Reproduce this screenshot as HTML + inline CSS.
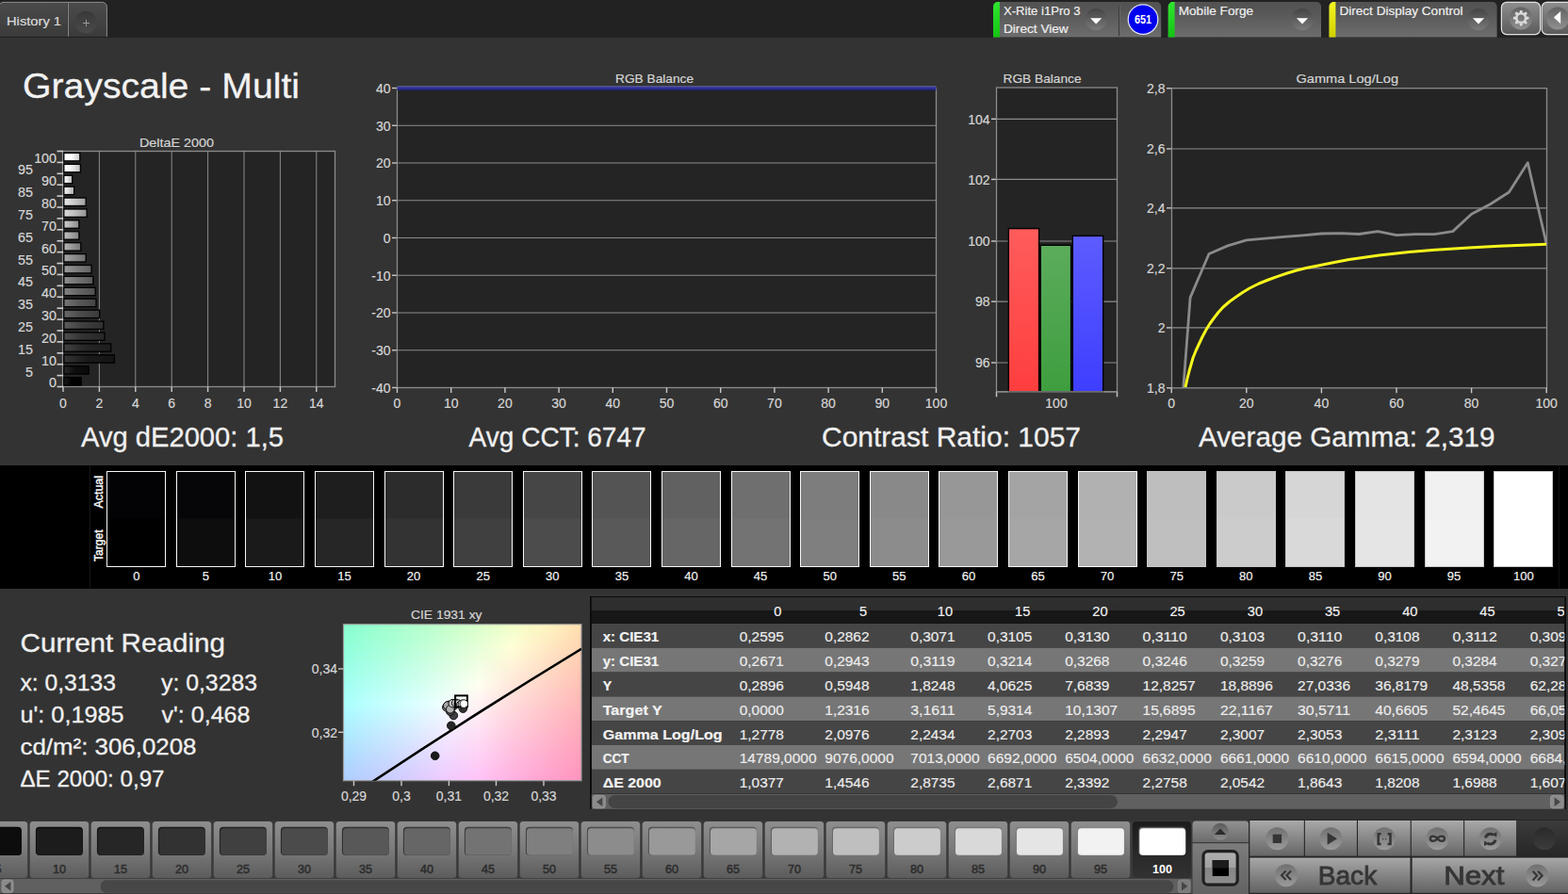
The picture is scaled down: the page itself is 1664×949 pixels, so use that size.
<!DOCTYPE html>
<html lang="en">
<head>
<meta charset="utf-8">
<title>Grayscale - Multi</title>
<style>
html,body{margin:0;padding:0;background:#333333;overflow:hidden}
svg{display:block;font-family:'Liberation Sans', Arial, sans-serif}
text{white-space:pre}
</style>
</head>
<body>
<svg width="1664" height="949" viewBox="0 0 1664 949">
<defs>
<linearGradient id="gTab" x1="0" y1="0" x2="0" y2="1"><stop offset="0" stop-color="#4b4b4b"/><stop offset="1" stop-color="#3b3b3b"/></linearGradient>
<linearGradient id="gPlus" x1="0" y1="0" x2="0" y2="1"><stop offset="0" stop-color="#383838"/><stop offset="1" stop-color="#4a4a4a"/></linearGradient>
<linearGradient id="gPanel" x1="0" y1="0" x2="0" y2="1"><stop offset="0" stop-color="#525252"/><stop offset="0.25" stop-color="#565656"/><stop offset="1" stop-color="#6d6d6d"/></linearGradient>
<linearGradient id="gGreen" x1="0" y1="0" x2="0" y2="1"><stop offset="0" stop-color="#2fe62f"/><stop offset="1" stop-color="#14c414"/></linearGradient>
<linearGradient id="gYellow" x1="0" y1="0" x2="0" y2="1"><stop offset="0" stop-color="#f4f422"/><stop offset="1" stop-color="#d2d200"/></linearGradient>
<linearGradient id="gDrop" x1="0" y1="0" x2="0" y2="1"><stop offset="0" stop-color="#444444"/><stop offset="1" stop-color="#7a7a7a"/></linearGradient>
<linearGradient id="gBtn" x1="0" y1="0" x2="0" y2="1"><stop offset="0" stop-color="#8e8e8e"/><stop offset="1" stop-color="#5a5a5a"/></linearGradient>
<linearGradient id="gBtnRec" x1="0" y1="0" x2="0" y2="1"><stop offset="0" stop-color="#626262"/><stop offset="1" stop-color="#909090"/></linearGradient>
<linearGradient id="gb100" x1="0" y1="0" x2="1" y2="0"><stop offset="0" stop-color="rgb(255,255,255)"/><stop offset="0.45" stop-color="rgb(255,255,255)"/><stop offset="1" stop-color="rgb(198,198,198)"/></linearGradient>
<linearGradient id="gb95" x1="0" y1="0" x2="1" y2="0"><stop offset="0" stop-color="rgb(255,255,255)"/><stop offset="0.45" stop-color="rgb(242,242,242)"/><stop offset="1" stop-color="rgb(188,188,188)"/></linearGradient>
<linearGradient id="gb90" x1="0" y1="0" x2="1" y2="0"><stop offset="0" stop-color="rgb(255,255,255)"/><stop offset="0.45" stop-color="rgb(229,229,229)"/><stop offset="1" stop-color="rgb(178,178,178)"/></linearGradient>
<linearGradient id="gb85" x1="0" y1="0" x2="1" y2="0"><stop offset="0" stop-color="rgb(245,245,245)"/><stop offset="0.45" stop-color="rgb(217,217,217)"/><stop offset="1" stop-color="rgb(169,169,169)"/></linearGradient>
<linearGradient id="gb80" x1="0" y1="0" x2="1" y2="0"><stop offset="0" stop-color="rgb(232,232,232)"/><stop offset="0.45" stop-color="rgb(204,204,204)"/><stop offset="1" stop-color="rgb(159,159,159)"/></linearGradient>
<linearGradient id="gb75" x1="0" y1="0" x2="1" y2="0"><stop offset="0" stop-color="rgb(219,219,219)"/><stop offset="0.45" stop-color="rgb(191,191,191)"/><stop offset="1" stop-color="rgb(148,148,148)"/></linearGradient>
<linearGradient id="gb70" x1="0" y1="0" x2="1" y2="0"><stop offset="0" stop-color="rgb(206,206,206)"/><stop offset="0.45" stop-color="rgb(178,178,178)"/><stop offset="1" stop-color="rgb(138,138,138)"/></linearGradient>
<linearGradient id="gb65" x1="0" y1="0" x2="1" y2="0"><stop offset="0" stop-color="rgb(194,194,194)"/><stop offset="0.45" stop-color="rgb(166,166,166)"/><stop offset="1" stop-color="rgb(129,129,129)"/></linearGradient>
<linearGradient id="gb60" x1="0" y1="0" x2="1" y2="0"><stop offset="0" stop-color="rgb(181,181,181)"/><stop offset="0.45" stop-color="rgb(153,153,153)"/><stop offset="1" stop-color="rgb(119,119,119)"/></linearGradient>
<linearGradient id="gb55" x1="0" y1="0" x2="1" y2="0"><stop offset="0" stop-color="rgb(168,168,168)"/><stop offset="0.45" stop-color="rgb(140,140,140)"/><stop offset="1" stop-color="rgb(109,109,109)"/></linearGradient>
<linearGradient id="gb50" x1="0" y1="0" x2="1" y2="0"><stop offset="0" stop-color="rgb(155,155,155)"/><stop offset="0.45" stop-color="rgb(127,127,127)"/><stop offset="1" stop-color="rgb(99,99,99)"/></linearGradient>
<linearGradient id="gb45" x1="0" y1="0" x2="1" y2="0"><stop offset="0" stop-color="rgb(143,143,143)"/><stop offset="0.45" stop-color="rgb(115,115,115)"/><stop offset="1" stop-color="rgb(89,89,89)"/></linearGradient>
<linearGradient id="gb40" x1="0" y1="0" x2="1" y2="0"><stop offset="0" stop-color="rgb(130,130,130)"/><stop offset="0.45" stop-color="rgb(102,102,102)"/><stop offset="1" stop-color="rgb(79,79,79)"/></linearGradient>
<linearGradient id="gb35" x1="0" y1="0" x2="1" y2="0"><stop offset="0" stop-color="rgb(117,117,117)"/><stop offset="0.45" stop-color="rgb(89,89,89)"/><stop offset="1" stop-color="rgb(69,69,69)"/></linearGradient>
<linearGradient id="gb30" x1="0" y1="0" x2="1" y2="0"><stop offset="0" stop-color="rgb(104,104,104)"/><stop offset="0.45" stop-color="rgb(76,76,76)"/><stop offset="1" stop-color="rgb(59,59,59)"/></linearGradient>
<linearGradient id="gb25" x1="0" y1="0" x2="1" y2="0"><stop offset="0" stop-color="rgb(92,92,92)"/><stop offset="0.45" stop-color="rgb(64,64,64)"/><stop offset="1" stop-color="rgb(49,49,49)"/></linearGradient>
<linearGradient id="gb20" x1="0" y1="0" x2="1" y2="0"><stop offset="0" stop-color="rgb(79,79,79)"/><stop offset="0.45" stop-color="rgb(51,51,51)"/><stop offset="1" stop-color="rgb(39,39,39)"/></linearGradient>
<linearGradient id="gb15" x1="0" y1="0" x2="1" y2="0"><stop offset="0" stop-color="rgb(66,66,66)"/><stop offset="0.45" stop-color="rgb(38,38,38)"/><stop offset="1" stop-color="rgb(29,29,29)"/></linearGradient>
<linearGradient id="gb10" x1="0" y1="0" x2="1" y2="0"><stop offset="0" stop-color="rgb(54,54,54)"/><stop offset="0.45" stop-color="rgb(26,26,26)"/><stop offset="1" stop-color="rgb(20,20,20)"/></linearGradient>
<linearGradient id="gb5" x1="0" y1="0" x2="1" y2="0"><stop offset="0" stop-color="rgb(41,41,41)"/><stop offset="0.45" stop-color="rgb(13,13,13)"/><stop offset="1" stop-color="rgb(10,10,10)"/></linearGradient>
<linearGradient id="gb0" x1="0" y1="0" x2="1" y2="0"><stop offset="0" stop-color="rgb(28,28,28)"/><stop offset="0.45" stop-color="rgb(0,0,0)"/><stop offset="1" stop-color="rgb(0,0,0)"/></linearGradient>
<linearGradient id="gR" x1="0" y1="0" x2="0" y2="1"><stop offset="0" stop-color="#ff5c5c"/><stop offset="1" stop-color="#ff3e3e"/></linearGradient>
<linearGradient id="gG" x1="0" y1="0" x2="0" y2="1"><stop offset="0" stop-color="#5cac5c"/><stop offset="1" stop-color="#3e9e3e"/></linearGradient>
<linearGradient id="gB" x1="0" y1="0" x2="0" y2="1"><stop offset="0" stop-color="#5c5cff"/><stop offset="1" stop-color="#3e3eff"/></linearGradient>
<clipPath id="cGam"><rect x="1243.5" y="93.7" width="399.0" height="318.1"/></clipPath>
<linearGradient id="c0" x1="0" y1="0" x2="1" y2="0"><stop offset="0.00" stop-color="#86ffce"/><stop offset="0.14" stop-color="#9affcd"/><stop offset="0.29" stop-color="#aeffcc"/><stop offset="0.43" stop-color="#c4ffcb"/><stop offset="0.57" stop-color="#daffca"/><stop offset="0.71" stop-color="#f1ffc9"/><stop offset="0.86" stop-color="#fff5c0"/><stop offset="1.00" stop-color="#ffe0af"/></linearGradient>
<linearGradient id="c1" x1="0" y1="0" x2="1" y2="0"><stop offset="0.00" stop-color="#87ffcf"/><stop offset="0.14" stop-color="#9bffcf"/><stop offset="0.29" stop-color="#b0ffce"/><stop offset="0.43" stop-color="#c5ffcd"/><stop offset="0.57" stop-color="#dcffcc"/><stop offset="0.71" stop-color="#f3ffcb"/><stop offset="0.86" stop-color="#fff3c1"/><stop offset="1.00" stop-color="#ffdeaf"/></linearGradient>
<linearGradient id="c2" x1="0" y1="0" x2="1" y2="0"><stop offset="0.00" stop-color="#88ffd1"/><stop offset="0.14" stop-color="#9cffd0"/><stop offset="0.29" stop-color="#b1ffcf"/><stop offset="0.43" stop-color="#c7ffce"/><stop offset="0.57" stop-color="#ddffce"/><stop offset="0.71" stop-color="#f5ffcd"/><stop offset="0.86" stop-color="#fff2c1"/><stop offset="1.00" stop-color="#ffddaf"/></linearGradient>
<linearGradient id="c3" x1="0" y1="0" x2="1" y2="0"><stop offset="0.00" stop-color="#89ffd3"/><stop offset="0.14" stop-color="#9effd2"/><stop offset="0.29" stop-color="#b3ffd1"/><stop offset="0.43" stop-color="#c8ffd0"/><stop offset="0.57" stop-color="#dfffcf"/><stop offset="0.71" stop-color="#f6ffce"/><stop offset="0.86" stop-color="#fff0c1"/><stop offset="1.00" stop-color="#ffdbb0"/></linearGradient>
<linearGradient id="c4" x1="0" y1="0" x2="1" y2="0"><stop offset="0.00" stop-color="#8bffd4"/><stop offset="0.14" stop-color="#9fffd3"/><stop offset="0.29" stop-color="#b4ffd3"/><stop offset="0.43" stop-color="#caffd2"/><stop offset="0.57" stop-color="#e1ffd1"/><stop offset="0.71" stop-color="#f8ffd0"/><stop offset="0.86" stop-color="#ffeec2"/><stop offset="1.00" stop-color="#ffdab0"/></linearGradient>
<linearGradient id="c5" x1="0" y1="0" x2="1" y2="0"><stop offset="0.00" stop-color="#8cffd6"/><stop offset="0.14" stop-color="#a0ffd5"/><stop offset="0.29" stop-color="#b5ffd4"/><stop offset="0.43" stop-color="#cbffd4"/><stop offset="0.57" stop-color="#e2ffd3"/><stop offset="0.71" stop-color="#faffd2"/><stop offset="0.86" stop-color="#ffedc2"/><stop offset="1.00" stop-color="#ffd8b0"/></linearGradient>
<linearGradient id="c6" x1="0" y1="0" x2="1" y2="0"><stop offset="0.00" stop-color="#8dffd7"/><stop offset="0.14" stop-color="#a2ffd7"/><stop offset="0.29" stop-color="#b7ffd6"/><stop offset="0.43" stop-color="#cdffd5"/><stop offset="0.57" stop-color="#e4ffd4"/><stop offset="0.71" stop-color="#fcffd4"/><stop offset="0.86" stop-color="#ffebc2"/><stop offset="1.00" stop-color="#ffd7b1"/></linearGradient>
<linearGradient id="c7" x1="0" y1="0" x2="1" y2="0"><stop offset="0.00" stop-color="#8effd9"/><stop offset="0.14" stop-color="#a3ffd8"/><stop offset="0.29" stop-color="#b8ffd8"/><stop offset="0.43" stop-color="#ceffd7"/><stop offset="0.57" stop-color="#e6ffd6"/><stop offset="0.71" stop-color="#feffd5"/><stop offset="0.86" stop-color="#ffe9c2"/><stop offset="1.00" stop-color="#ffd5b1"/></linearGradient>
<linearGradient id="c8" x1="0" y1="0" x2="1" y2="0"><stop offset="0.00" stop-color="#8fffdb"/><stop offset="0.14" stop-color="#a4ffda"/><stop offset="0.29" stop-color="#baffd9"/><stop offset="0.43" stop-color="#d0ffd9"/><stop offset="0.57" stop-color="#e7ffd8"/><stop offset="0.71" stop-color="#fffed7"/><stop offset="0.86" stop-color="#ffe8c3"/><stop offset="1.00" stop-color="#ffd4b1"/></linearGradient>
<linearGradient id="c9" x1="0" y1="0" x2="1" y2="0"><stop offset="0.00" stop-color="#91ffdc"/><stop offset="0.14" stop-color="#a5ffdc"/><stop offset="0.29" stop-color="#bbffdb"/><stop offset="0.43" stop-color="#d2ffda"/><stop offset="0.57" stop-color="#e9ffda"/><stop offset="0.71" stop-color="#fffdd7"/><stop offset="0.86" stop-color="#ffe6c3"/><stop offset="1.00" stop-color="#ffd2b2"/></linearGradient>
<linearGradient id="c10" x1="0" y1="0" x2="1" y2="0"><stop offset="0.00" stop-color="#92ffde"/><stop offset="0.14" stop-color="#a7ffde"/><stop offset="0.29" stop-color="#bdffdd"/><stop offset="0.43" stop-color="#d3ffdc"/><stop offset="0.57" stop-color="#ebffdc"/><stop offset="0.71" stop-color="#fffbd7"/><stop offset="0.86" stop-color="#ffe4c3"/><stop offset="1.00" stop-color="#ffd1b2"/></linearGradient>
<linearGradient id="c11" x1="0" y1="0" x2="1" y2="0"><stop offset="0.00" stop-color="#93ffe0"/><stop offset="0.14" stop-color="#a8ffdf"/><stop offset="0.29" stop-color="#beffdf"/><stop offset="0.43" stop-color="#d5ffde"/><stop offset="0.57" stop-color="#edffdd"/><stop offset="0.71" stop-color="#fff9d7"/><stop offset="0.86" stop-color="#ffe3c4"/><stop offset="1.00" stop-color="#ffcfb2"/></linearGradient>
<linearGradient id="c12" x1="0" y1="0" x2="1" y2="0"><stop offset="0.00" stop-color="#94ffe2"/><stop offset="0.14" stop-color="#aaffe1"/><stop offset="0.29" stop-color="#c0ffe0"/><stop offset="0.43" stop-color="#d6ffe0"/><stop offset="0.57" stop-color="#eeffdf"/><stop offset="0.71" stop-color="#fff7d8"/><stop offset="0.86" stop-color="#ffe1c4"/><stop offset="1.00" stop-color="#ffceb3"/></linearGradient>
<linearGradient id="c13" x1="0" y1="0" x2="1" y2="0"><stop offset="0.00" stop-color="#96ffe3"/><stop offset="0.14" stop-color="#abffe3"/><stop offset="0.29" stop-color="#c1ffe2"/><stop offset="0.43" stop-color="#d8ffe2"/><stop offset="0.57" stop-color="#f0ffe1"/><stop offset="0.71" stop-color="#fff5d8"/><stop offset="0.86" stop-color="#ffdfc4"/><stop offset="1.00" stop-color="#ffccb3"/></linearGradient>
<linearGradient id="c14" x1="0" y1="0" x2="1" y2="0"><stop offset="0.00" stop-color="#97ffe5"/><stop offset="0.14" stop-color="#acffe5"/><stop offset="0.29" stop-color="#c3ffe4"/><stop offset="0.43" stop-color="#daffe4"/><stop offset="0.57" stop-color="#f2ffe3"/><stop offset="0.71" stop-color="#fff3d8"/><stop offset="0.86" stop-color="#ffdec4"/><stop offset="1.00" stop-color="#ffcbb3"/></linearGradient>
<linearGradient id="c15" x1="0" y1="0" x2="1" y2="0"><stop offset="0.00" stop-color="#98ffe7"/><stop offset="0.14" stop-color="#aeffe6"/><stop offset="0.29" stop-color="#c4ffe6"/><stop offset="0.43" stop-color="#dbffe5"/><stop offset="0.57" stop-color="#f4ffe5"/><stop offset="0.71" stop-color="#fff2d8"/><stop offset="0.86" stop-color="#ffdcc5"/><stop offset="1.00" stop-color="#ffc9b3"/></linearGradient>
<linearGradient id="c16" x1="0" y1="0" x2="1" y2="0"><stop offset="0.00" stop-color="#9affe9"/><stop offset="0.14" stop-color="#afffe8"/><stop offset="0.29" stop-color="#c6ffe8"/><stop offset="0.43" stop-color="#ddffe7"/><stop offset="0.57" stop-color="#f6ffe7"/><stop offset="0.71" stop-color="#fff0d9"/><stop offset="0.86" stop-color="#ffdac5"/><stop offset="1.00" stop-color="#ffc8b4"/></linearGradient>
<linearGradient id="c17" x1="0" y1="0" x2="1" y2="0"><stop offset="0.00" stop-color="#9bffea"/><stop offset="0.14" stop-color="#b1ffea"/><stop offset="0.29" stop-color="#c7ffea"/><stop offset="0.43" stop-color="#dfffe9"/><stop offset="0.57" stop-color="#f7ffe9"/><stop offset="0.71" stop-color="#ffeed9"/><stop offset="0.86" stop-color="#ffd9c5"/><stop offset="1.00" stop-color="#ffc6b4"/></linearGradient>
<linearGradient id="c18" x1="0" y1="0" x2="1" y2="0"><stop offset="0.00" stop-color="#9cffec"/><stop offset="0.14" stop-color="#b2ffec"/><stop offset="0.29" stop-color="#c9ffeb"/><stop offset="0.43" stop-color="#e1ffeb"/><stop offset="0.57" stop-color="#f9ffeb"/><stop offset="0.71" stop-color="#ffecd9"/><stop offset="0.86" stop-color="#ffd7c5"/><stop offset="1.00" stop-color="#ffc5b4"/></linearGradient>
<linearGradient id="c19" x1="0" y1="0" x2="1" y2="0"><stop offset="0.00" stop-color="#9dffee"/><stop offset="0.14" stop-color="#b4ffee"/><stop offset="0.29" stop-color="#caffed"/><stop offset="0.43" stop-color="#e2ffed"/><stop offset="0.57" stop-color="#fbffed"/><stop offset="0.71" stop-color="#ffebd9"/><stop offset="0.86" stop-color="#ffd6c6"/><stop offset="1.00" stop-color="#ffc3b5"/></linearGradient>
<linearGradient id="c20" x1="0" y1="0" x2="1" y2="0"><stop offset="0.00" stop-color="#9ffff0"/><stop offset="0.14" stop-color="#b5fff0"/><stop offset="0.29" stop-color="#ccffef"/><stop offset="0.43" stop-color="#e4ffef"/><stop offset="0.57" stop-color="#fdffef"/><stop offset="0.71" stop-color="#ffe9da"/><stop offset="0.86" stop-color="#ffd4c6"/><stop offset="1.00" stop-color="#ffc2b5"/></linearGradient>
<linearGradient id="c21" x1="0" y1="0" x2="1" y2="0"><stop offset="0.00" stop-color="#a0fff2"/><stop offset="0.14" stop-color="#b6fff1"/><stop offset="0.29" stop-color="#cefff1"/><stop offset="0.43" stop-color="#e6fff1"/><stop offset="0.57" stop-color="#fffff1"/><stop offset="0.71" stop-color="#ffe7da"/><stop offset="0.86" stop-color="#ffd2c6"/><stop offset="1.00" stop-color="#ffc1b5"/></linearGradient>
<linearGradient id="c22" x1="0" y1="0" x2="1" y2="0"><stop offset="0.00" stop-color="#a2fff4"/><stop offset="0.14" stop-color="#b8fff3"/><stop offset="0.29" stop-color="#cffff3"/><stop offset="0.43" stop-color="#e8fff3"/><stop offset="0.57" stop-color="#fffdf1"/><stop offset="0.71" stop-color="#ffe5da"/><stop offset="0.86" stop-color="#ffd1c7"/><stop offset="1.00" stop-color="#ffbfb5"/></linearGradient>
<linearGradient id="c23" x1="0" y1="0" x2="1" y2="0"><stop offset="0.00" stop-color="#a3fff5"/><stop offset="0.14" stop-color="#b9fff5"/><stop offset="0.29" stop-color="#d1fff5"/><stop offset="0.43" stop-color="#e9fff5"/><stop offset="0.57" stop-color="#fffbf1"/><stop offset="0.71" stop-color="#ffe4da"/><stop offset="0.86" stop-color="#ffcfc7"/><stop offset="1.00" stop-color="#ffbeb6"/></linearGradient>
<linearGradient id="c24" x1="0" y1="0" x2="1" y2="0"><stop offset="0.00" stop-color="#a4fff7"/><stop offset="0.14" stop-color="#bbfff7"/><stop offset="0.29" stop-color="#d3fff7"/><stop offset="0.43" stop-color="#ebfff7"/><stop offset="0.57" stop-color="#fff9f1"/><stop offset="0.71" stop-color="#ffe2db"/><stop offset="0.86" stop-color="#ffcec7"/><stop offset="1.00" stop-color="#ffbcb6"/></linearGradient>
<linearGradient id="c25" x1="0" y1="0" x2="1" y2="0"><stop offset="0.00" stop-color="#a6fff9"/><stop offset="0.14" stop-color="#bdfff9"/><stop offset="0.29" stop-color="#d4fff9"/><stop offset="0.43" stop-color="#edfff9"/><stop offset="0.57" stop-color="#fff7f1"/><stop offset="0.71" stop-color="#ffe0db"/><stop offset="0.86" stop-color="#ffccc7"/><stop offset="1.00" stop-color="#ffbbb6"/></linearGradient>
<linearGradient id="c26" x1="0" y1="0" x2="1" y2="0"><stop offset="0.00" stop-color="#a7fffb"/><stop offset="0.14" stop-color="#befffb"/><stop offset="0.29" stop-color="#d6fffb"/><stop offset="0.43" stop-color="#effffb"/><stop offset="0.57" stop-color="#fff5f2"/><stop offset="0.71" stop-color="#ffdedb"/><stop offset="0.86" stop-color="#ffcbc8"/><stop offset="1.00" stop-color="#ffb9b7"/></linearGradient>
<linearGradient id="c27" x1="0" y1="0" x2="1" y2="0"><stop offset="0.00" stop-color="#a9fffd"/><stop offset="0.14" stop-color="#c0fffd"/><stop offset="0.29" stop-color="#d8fffd"/><stop offset="0.43" stop-color="#f1fffd"/><stop offset="0.57" stop-color="#fff3f2"/><stop offset="0.71" stop-color="#ffdddb"/><stop offset="0.86" stop-color="#ffc9c8"/><stop offset="1.00" stop-color="#ffb8b7"/></linearGradient>
<linearGradient id="c28" x1="0" y1="0" x2="1" y2="0"><stop offset="0.00" stop-color="#aaffff"/><stop offset="0.14" stop-color="#c1ffff"/><stop offset="0.29" stop-color="#d9ffff"/><stop offset="0.43" stop-color="#f2ffff"/><stop offset="0.57" stop-color="#fff2f2"/><stop offset="0.71" stop-color="#ffdbdb"/><stop offset="0.86" stop-color="#ffc8c8"/><stop offset="1.00" stop-color="#ffb7b7"/></linearGradient>
<linearGradient id="c29" x1="0" y1="0" x2="1" y2="0"><stop offset="0.00" stop-color="#aafdff"/><stop offset="0.14" stop-color="#c1fdff"/><stop offset="0.29" stop-color="#d9fdff"/><stop offset="0.43" stop-color="#f2fdff"/><stop offset="0.57" stop-color="#fff0f2"/><stop offset="0.71" stop-color="#ffd9dc"/><stop offset="0.86" stop-color="#ffc6c8"/><stop offset="1.00" stop-color="#ffb5b7"/></linearGradient>
<linearGradient id="c30" x1="0" y1="0" x2="1" y2="0"><stop offset="0.00" stop-color="#aafbff"/><stop offset="0.14" stop-color="#c1fbff"/><stop offset="0.29" stop-color="#d9fbff"/><stop offset="0.43" stop-color="#f2faff"/><stop offset="0.57" stop-color="#ffeef2"/><stop offset="0.71" stop-color="#ffd8dc"/><stop offset="0.86" stop-color="#ffc5c9"/><stop offset="1.00" stop-color="#ffb4b8"/></linearGradient>
<linearGradient id="c31" x1="0" y1="0" x2="1" y2="0"><stop offset="0.00" stop-color="#aaf9ff"/><stop offset="0.14" stop-color="#c1f9ff"/><stop offset="0.29" stop-color="#d9f9ff"/><stop offset="0.43" stop-color="#f2f8ff"/><stop offset="0.57" stop-color="#ffecf2"/><stop offset="0.71" stop-color="#ffd6dc"/><stop offset="0.86" stop-color="#ffc3c9"/><stop offset="1.00" stop-color="#ffb3b8"/></linearGradient>
<linearGradient id="c32" x1="0" y1="0" x2="1" y2="0"><stop offset="0.00" stop-color="#aaf7ff"/><stop offset="0.14" stop-color="#c1f7ff"/><stop offset="0.29" stop-color="#d9f7ff"/><stop offset="0.43" stop-color="#f2f6ff"/><stop offset="0.57" stop-color="#ffeaf3"/><stop offset="0.71" stop-color="#ffd4dc"/><stop offset="0.86" stop-color="#ffc2c9"/><stop offset="1.00" stop-color="#ffb1b8"/></linearGradient>
<linearGradient id="c33" x1="0" y1="0" x2="1" y2="0"><stop offset="0.00" stop-color="#abf5ff"/><stop offset="0.14" stop-color="#c1f5ff"/><stop offset="0.29" stop-color="#d9f5ff"/><stop offset="0.43" stop-color="#f2f4ff"/><stop offset="0.57" stop-color="#ffe8f3"/><stop offset="0.71" stop-color="#ffd3dd"/><stop offset="0.86" stop-color="#ffc0c9"/><stop offset="1.00" stop-color="#ffb0b8"/></linearGradient>
<linearGradient id="c34" x1="0" y1="0" x2="1" y2="0"><stop offset="0.00" stop-color="#abf3ff"/><stop offset="0.14" stop-color="#c1f3ff"/><stop offset="0.29" stop-color="#d9f3ff"/><stop offset="0.43" stop-color="#f2f2ff"/><stop offset="0.57" stop-color="#ffe7f3"/><stop offset="0.71" stop-color="#ffd1dd"/><stop offset="0.86" stop-color="#ffbfca"/><stop offset="1.00" stop-color="#ffaeb9"/></linearGradient>
<linearGradient id="c35" x1="0" y1="0" x2="1" y2="0"><stop offset="0.00" stop-color="#abf1ff"/><stop offset="0.14" stop-color="#c1f1ff"/><stop offset="0.29" stop-color="#d9f1ff"/><stop offset="0.43" stop-color="#f2f0ff"/><stop offset="0.57" stop-color="#ffe5f3"/><stop offset="0.71" stop-color="#ffd0dd"/><stop offset="0.86" stop-color="#ffbdca"/><stop offset="1.00" stop-color="#ffadb9"/></linearGradient>
<linearGradient id="c36" x1="0" y1="0" x2="1" y2="0"><stop offset="0.00" stop-color="#abefff"/><stop offset="0.14" stop-color="#c2efff"/><stop offset="0.29" stop-color="#d9efff"/><stop offset="0.43" stop-color="#f2eeff"/><stop offset="0.57" stop-color="#ffe3f3"/><stop offset="0.71" stop-color="#ffcedd"/><stop offset="0.86" stop-color="#ffbcca"/><stop offset="1.00" stop-color="#ffacb9"/></linearGradient>
<linearGradient id="c37" x1="0" y1="0" x2="1" y2="0"><stop offset="0.00" stop-color="#abedff"/><stop offset="0.14" stop-color="#c2edff"/><stop offset="0.29" stop-color="#d9edff"/><stop offset="0.43" stop-color="#f1ecff"/><stop offset="0.57" stop-color="#ffe1f4"/><stop offset="0.71" stop-color="#ffccdd"/><stop offset="0.86" stop-color="#ffbaca"/><stop offset="1.00" stop-color="#ffaaba"/></linearGradient>
<linearGradient id="c38" x1="0" y1="0" x2="1" y2="0"><stop offset="0.00" stop-color="#abecff"/><stop offset="0.14" stop-color="#c2ebff"/><stop offset="0.29" stop-color="#d9ebff"/><stop offset="0.43" stop-color="#f1eaff"/><stop offset="0.57" stop-color="#ffdff4"/><stop offset="0.71" stop-color="#ffcbde"/><stop offset="0.86" stop-color="#ffb9cb"/><stop offset="1.00" stop-color="#ffa9ba"/></linearGradient>
<linearGradient id="c39" x1="0" y1="0" x2="1" y2="0"><stop offset="0.00" stop-color="#abeaff"/><stop offset="0.14" stop-color="#c2e9ff"/><stop offset="0.29" stop-color="#d9e9ff"/><stop offset="0.43" stop-color="#f1e8ff"/><stop offset="0.57" stop-color="#ffdef4"/><stop offset="0.71" stop-color="#ffc9de"/><stop offset="0.86" stop-color="#ffb7cb"/><stop offset="1.00" stop-color="#ffa8ba"/></linearGradient>
<linearGradient id="c40" x1="0" y1="0" x2="1" y2="0"><stop offset="0.00" stop-color="#abe8ff"/><stop offset="0.14" stop-color="#c2e7ff"/><stop offset="0.29" stop-color="#d9e7ff"/><stop offset="0.43" stop-color="#f1e6ff"/><stop offset="0.57" stop-color="#ffdcf4"/><stop offset="0.71" stop-color="#ffc8de"/><stop offset="0.86" stop-color="#ffb6cb"/><stop offset="1.00" stop-color="#ffa6ba"/></linearGradient>
<linearGradient id="c41" x1="0" y1="0" x2="1" y2="0"><stop offset="0.00" stop-color="#ace6ff"/><stop offset="0.14" stop-color="#c2e5ff"/><stop offset="0.29" stop-color="#d9e5ff"/><stop offset="0.43" stop-color="#f1e4ff"/><stop offset="0.57" stop-color="#ffdaf4"/><stop offset="0.71" stop-color="#ffc6de"/><stop offset="0.86" stop-color="#ffb5cb"/><stop offset="1.00" stop-color="#ffa5bb"/></linearGradient>
<linearGradient id="c42" x1="0" y1="0" x2="1" y2="0"><stop offset="0.00" stop-color="#ace4ff"/><stop offset="0.14" stop-color="#c2e4ff"/><stop offset="0.29" stop-color="#d9e3ff"/><stop offset="0.43" stop-color="#f1e2ff"/><stop offset="0.57" stop-color="#ffd8f4"/><stop offset="0.71" stop-color="#ffc4df"/><stop offset="0.86" stop-color="#ffb3cc"/><stop offset="1.00" stop-color="#ffa4bb"/></linearGradient>
<linearGradient id="c43" x1="0" y1="0" x2="1" y2="0"><stop offset="0.00" stop-color="#ace2ff"/><stop offset="0.14" stop-color="#c2e2ff"/><stop offset="0.29" stop-color="#d9e1ff"/><stop offset="0.43" stop-color="#f1e0ff"/><stop offset="0.57" stop-color="#ffd7f5"/><stop offset="0.71" stop-color="#ffc3df"/><stop offset="0.86" stop-color="#ffb2cc"/><stop offset="1.00" stop-color="#ffa3bb"/></linearGradient>
<linearGradient id="c44" x1="0" y1="0" x2="1" y2="0"><stop offset="0.00" stop-color="#ace1ff"/><stop offset="0.14" stop-color="#c2e0ff"/><stop offset="0.29" stop-color="#d9dfff"/><stop offset="0.43" stop-color="#f1dfff"/><stop offset="0.57" stop-color="#ffd5f5"/><stop offset="0.71" stop-color="#ffc1df"/><stop offset="0.86" stop-color="#ffb0cc"/><stop offset="1.00" stop-color="#ffa1bb"/></linearGradient>
<linearGradient id="c45" x1="0" y1="0" x2="1" y2="0"><stop offset="0.00" stop-color="#acdfff"/><stop offset="0.14" stop-color="#c2deff"/><stop offset="0.29" stop-color="#d9ddff"/><stop offset="0.43" stop-color="#f1ddff"/><stop offset="0.57" stop-color="#ffd3f5"/><stop offset="0.71" stop-color="#ffc0df"/><stop offset="0.86" stop-color="#ffafcc"/><stop offset="1.00" stop-color="#ffa0bc"/></linearGradient>
<linearGradient id="c46" x1="0" y1="0" x2="1" y2="0"><stop offset="0.00" stop-color="#acddff"/><stop offset="0.14" stop-color="#c2dcff"/><stop offset="0.29" stop-color="#d9dcff"/><stop offset="0.43" stop-color="#f1dbff"/><stop offset="0.57" stop-color="#ffd1f5"/><stop offset="0.71" stop-color="#ffbedf"/><stop offset="0.86" stop-color="#ffadcc"/><stop offset="1.00" stop-color="#ff9fbc"/></linearGradient>
<linearGradient id="c47" x1="0" y1="0" x2="1" y2="0"><stop offset="0.00" stop-color="#acdbff"/><stop offset="0.14" stop-color="#c2daff"/><stop offset="0.29" stop-color="#d9daff"/><stop offset="0.43" stop-color="#f0d9ff"/><stop offset="0.57" stop-color="#ffd0f5"/><stop offset="0.71" stop-color="#ffbde0"/><stop offset="0.86" stop-color="#ffaccd"/><stop offset="1.00" stop-color="#ff9dbc"/></linearGradient>
<linearGradient id="c48" x1="0" y1="0" x2="1" y2="0"><stop offset="0.00" stop-color="#acd9ff"/><stop offset="0.14" stop-color="#c2d9ff"/><stop offset="0.29" stop-color="#d9d8ff"/><stop offset="0.43" stop-color="#f0d7ff"/><stop offset="0.57" stop-color="#ffcef5"/><stop offset="0.71" stop-color="#ffbbe0"/><stop offset="0.86" stop-color="#ffabcd"/><stop offset="1.00" stop-color="#ff9cbc"/></linearGradient>
<linearGradient id="c49" x1="0" y1="0" x2="1" y2="0"><stop offset="0.00" stop-color="#acd8ff"/><stop offset="0.14" stop-color="#c2d7ff"/><stop offset="0.29" stop-color="#d9d6ff"/><stop offset="0.43" stop-color="#f0d5ff"/><stop offset="0.57" stop-color="#ffccf6"/><stop offset="0.71" stop-color="#ffbae0"/><stop offset="0.86" stop-color="#ffa9cd"/><stop offset="1.00" stop-color="#ff9bbd"/></linearGradient>
<linearGradient id="c50" x1="0" y1="0" x2="1" y2="0"><stop offset="0.00" stop-color="#add6ff"/><stop offset="0.14" stop-color="#c2d5ff"/><stop offset="0.29" stop-color="#d9d4ff"/><stop offset="0.43" stop-color="#f0d3ff"/><stop offset="0.57" stop-color="#ffcbf6"/><stop offset="0.71" stop-color="#ffb8e0"/><stop offset="0.86" stop-color="#ffa8cd"/><stop offset="1.00" stop-color="#ff9abd"/></linearGradient>
<linearGradient id="c51" x1="0" y1="0" x2="1" y2="0"><stop offset="0.00" stop-color="#add4ff"/><stop offset="0.14" stop-color="#c2d3ff"/><stop offset="0.29" stop-color="#d9d2ff"/><stop offset="0.43" stop-color="#f0d2ff"/><stop offset="0.57" stop-color="#ffc9f6"/><stop offset="0.71" stop-color="#ffb7e0"/><stop offset="0.86" stop-color="#ffa7ce"/><stop offset="1.00" stop-color="#ff98bd"/></linearGradient>
<linearGradient id="c52" x1="0" y1="0" x2="1" y2="0"><stop offset="0.00" stop-color="#add3ff"/><stop offset="0.14" stop-color="#c2d2ff"/><stop offset="0.29" stop-color="#d9d1ff"/><stop offset="0.43" stop-color="#f0d0ff"/><stop offset="0.57" stop-color="#ffc7f6"/><stop offset="0.71" stop-color="#ffb5e1"/><stop offset="0.86" stop-color="#ffa5ce"/><stop offset="1.00" stop-color="#ff97bd"/></linearGradient>
<linearGradient id="c53" x1="0" y1="0" x2="1" y2="0"><stop offset="0.00" stop-color="#add1ff"/><stop offset="0.14" stop-color="#c2d0ff"/><stop offset="0.29" stop-color="#d9cfff"/><stop offset="0.43" stop-color="#f0ceff"/><stop offset="0.57" stop-color="#ffc6f6"/><stop offset="0.71" stop-color="#ffb4e1"/><stop offset="0.86" stop-color="#ffa4ce"/><stop offset="1.00" stop-color="#ff96be"/></linearGradient>
<linearGradient id="c54" x1="0" y1="0" x2="1" y2="0"><stop offset="0.00" stop-color="#adcfff"/><stop offset="0.14" stop-color="#c2ceff"/><stop offset="0.29" stop-color="#d9cdff"/><stop offset="0.43" stop-color="#f0ccff"/><stop offset="0.57" stop-color="#ffc4f6"/><stop offset="0.71" stop-color="#ffb2e1"/><stop offset="0.86" stop-color="#ffa2ce"/><stop offset="1.00" stop-color="#ff95be"/></linearGradient>
<linearGradient id="c55" x1="0" y1="0" x2="1" y2="0"><stop offset="0.00" stop-color="#adcdff"/><stop offset="0.14" stop-color="#c2ccff"/><stop offset="0.29" stop-color="#d9cbff"/><stop offset="0.43" stop-color="#f0caff"/><stop offset="0.57" stop-color="#ffc3f7"/><stop offset="0.71" stop-color="#ffb1e1"/><stop offset="0.86" stop-color="#ffa1cf"/><stop offset="1.00" stop-color="#ff93be"/></linearGradient>
<clipPath id="cCie"><rect x="364.5" y="662.7" width="252.5" height="166.0"/></clipPath>
<linearGradient id="gHead" x1="0" y1="0" x2="0" y2="1"><stop offset="0" stop-color="#2f2f2f"/><stop offset="0.52" stop-color="#2d2d2d"/><stop offset="0.52" stop-color="#171717"/><stop offset="1" stop-color="#171717"/></linearGradient>
<clipPath id="cTab"><rect x="627.8" y="633" width="1032.5" height="226"/></clipPath>
<linearGradient id="gTile" x1="0" y1="0" x2="0" y2="1"><stop offset="0" stop-color="#8e8e8e"/><stop offset="0.5" stop-color="#7a7a7a"/><stop offset="1" stop-color="#5c5c5c"/></linearGradient>
<linearGradient id="gTileSel" x1="0" y1="0" x2="0" y2="1"><stop offset="0" stop-color="#1c1c1c"/><stop offset="1" stop-color="#323232"/></linearGradient>
<filter id="fInner" x="-10%" y="-10%" width="120%" height="120%"><feGaussianBlur stdDeviation="0.6"/></filter>
<linearGradient id="gUp" x1="0" y1="0" x2="0" y2="1"><stop offset="0" stop-color="#929292"/><stop offset="1" stop-color="#6c6c6c"/></linearGradient>
<linearGradient id="gUp2" x1="0" y1="0" x2="0" y2="1"><stop offset="0" stop-color="#7c7c7c"/><stop offset="1" stop-color="#626262"/></linearGradient>
<linearGradient id="gRecess" x1="0" y1="0" x2="0" y2="1"><stop offset="0" stop-color="#5a5a5a"/><stop offset="1" stop-color="#8c8c8c"/></linearGradient>
<linearGradient id="gSq" x1="0" y1="0" x2="0" y2="1"><stop offset="0" stop-color="#b0b0b0"/><stop offset="0.5" stop-color="#a2a2a2"/><stop offset="0.5" stop-color="#868686"/><stop offset="1" stop-color="#8e8e8e"/></linearGradient>
<linearGradient id="gBtnA" x1="0" y1="0" x2="0" y2="1"><stop offset="0" stop-color="#b4b4b4"/><stop offset="0.04" stop-color="#a6a6a6"/><stop offset="1" stop-color="#666666"/></linearGradient>
<linearGradient id="gBtnB" x1="0" y1="0" x2="0" y2="1"><stop offset="0" stop-color="#b4b4b4"/><stop offset="0.04" stop-color="#a4a4a4"/><stop offset="1" stop-color="#626262"/></linearGradient>
<linearGradient id="gDark" x1="0" y1="0" x2="0" y2="1"><stop offset="0" stop-color="#3c3c3c"/><stop offset="1" stop-color="#262626"/></linearGradient>
<linearGradient id="gRec2" x1="0" y1="0" x2="0" y2="1"><stop offset="0" stop-color="#707070"/><stop offset="1" stop-color="#9a9a9a"/></linearGradient>
<linearGradient id="gRecD" x1="0" y1="0" x2="0" y2="1"><stop offset="0" stop-color="#2a2a2a"/><stop offset="1" stop-color="#3c3c3c"/></linearGradient>
<filter id="fTxt" x="-5%" y="-20%" width="110%" height="140%"><feGaussianBlur stdDeviation="0.55"/></filter>
</defs>
<rect x="0.00" y="0.00" width="1664.00" height="949.00" fill="#333333"/>
<rect x="0.00" y="0.00" width="1664.00" height="40.00" fill="#222222"/>
<path d="M-1 38.8V7a5 5 0 0 1 5 -4.8H108.6a5 5 0 0 1 5 5V38.8Z" fill="url(#gTab)"/>
<path d="M-1 7a5 5 0 0 1 5 -4.6H108.4a5 5 0 0 1 5 5V38.8" fill="none" stroke="#8c8c8c" stroke-width="1"/>
<line x1="71.60" y1="3.00" x2="71.60" y2="38.80" stroke="#3a3a3a" stroke-width="1"/>
<line x1="72.50" y1="3.00" x2="72.50" y2="38.80" stroke="#858585" stroke-width="1"/>
<text x="7.0" y="27.0" font-size="13.5" fill="#dcdcdc" stroke="#dcdcdc" stroke-width="0.18" textLength="58.0" lengthAdjust="spacingAndGlyphs">History 1</text>
<circle cx="91.4" cy="23.5" r="11.7" fill="url(#gPlus)"/>
<line x1="88.00" y1="24.50" x2="95.00" y2="24.50" stroke="#9a9a9a" stroke-width="1"/>
<line x1="91.50" y1="21.00" x2="91.50" y2="28.00" stroke="#9a9a9a" stroke-width="1"/>
<path d="M1054.0 39.5V7a5 5 0 0 1 5 -5H1227.2a5 5 0 0 1 5 5V39.5Z" fill="url(#gPanel)"/>
<path d="M1054.0 39.5V7a5 5 0 0 1 5 -5H1060.9V39.5Z" fill="url(#gGreen)"/>
<text x="1065.0" y="15.6" font-size="13" fill="#f0f0f0" stroke="#f0f0f0" stroke-width="0.18" textLength="81.5" lengthAdjust="spacingAndGlyphs">X-Rite i1Pro 3</text>
<text x="1065.0" y="34.7" font-size="13" fill="#f0f0f0" stroke="#f0f0f0" stroke-width="0.18" textLength="68.7" lengthAdjust="spacingAndGlyphs">Direct View</text>
<circle cx="1163.2" cy="20.6" r="11.6" fill="url(#gDrop)"/>
<path d="M1157.1 19.2h12.2l-6.1 6.2Z" fill="#ffffff"/>
<line x1="1187.50" y1="6.00" x2="1187.50" y2="38.00" stroke="#3a3a3a" stroke-width="1"/>
<line x1="1188.50" y1="6.00" x2="1188.50" y2="38.00" stroke="#666666" stroke-width="1"/>
<circle cx="1213" cy="20.6" r="15.8" fill="#0000ee" stroke="#e6e6f6" stroke-width="1.2"/>
<text x="1213.0" y="25.1" font-size="12.5" fill="#ffffff" text-anchor="middle" font-weight="bold" textLength="18.0" lengthAdjust="spacingAndGlyphs">651</text>
<path d="M1239.7 39.5V7a5 5 0 0 1 5 -5H1397.0a5 5 0 0 1 5 5V39.5Z" fill="url(#gPanel)"/>
<path d="M1239.7 39.5V7a5 5 0 0 1 5 -5H1246.6V39.5Z" fill="url(#gGreen)"/>
<text x="1250.7" y="15.6" font-size="13" fill="#f0f0f0" stroke="#f0f0f0" stroke-width="0.18" textLength="79.5" lengthAdjust="spacingAndGlyphs">Mobile Forge</text>
<circle cx="1382.0" cy="20.6" r="11.6" fill="url(#gDrop)"/>
<path d="M1375.9 19.2h12.2l-6.1 6.2Z" fill="#ffffff"/>
<path d="M1410.5 39.5V7a5 5 0 0 1 5 -5H1583.6a5 5 0 0 1 5 5V39.5Z" fill="url(#gPanel)"/>
<path d="M1410.5 39.5V7a5 5 0 0 1 5 -5H1417.4V39.5Z" fill="url(#gYellow)"/>
<text x="1421.5" y="15.6" font-size="13" fill="#f0f0f0" stroke="#f0f0f0" stroke-width="0.18" textLength="131.0" lengthAdjust="spacingAndGlyphs">Direct Display Control</text>
<circle cx="1569.0" cy="20.6" r="11.6" fill="url(#gDrop)"/>
<path d="M1562.9 19.2h12.2l-6.1 6.2Z" fill="#ffffff"/>
<rect x="1593.4" y="2.4" width="41.2" height="34.2" rx="5.5" fill="url(#gBtn)" stroke="#e2e2e2" stroke-width="1.2"/>
<rect x="1636.2" y="2.4" width="41" height="34.2" rx="5.5" fill="url(#gBtn)" stroke="#e2e2e2" stroke-width="1.2"/>
<circle cx="1614" cy="19.4" r="12" fill="url(#gBtnRec)"/>
<circle cx="1653" cy="19.4" r="12" fill="url(#gBtnRec)"/>
<g transform="translate(1614.2 19.2)"><path d="M-2 -5.2L-1.1 -8.3H1.1L2 -5.2Z" fill="#dadada" transform="rotate(0)"/><path d="M-2 -5.2L-1.1 -8.3H1.1L2 -5.2Z" fill="#dadada" transform="rotate(45)"/><path d="M-2 -5.2L-1.1 -8.3H1.1L2 -5.2Z" fill="#dadada" transform="rotate(90)"/><path d="M-2 -5.2L-1.1 -8.3H1.1L2 -5.2Z" fill="#dadada" transform="rotate(135)"/><path d="M-2 -5.2L-1.1 -8.3H1.1L2 -5.2Z" fill="#dadada" transform="rotate(180)"/><path d="M-2 -5.2L-1.1 -8.3H1.1L2 -5.2Z" fill="#dadada" transform="rotate(225)"/><path d="M-2 -5.2L-1.1 -8.3H1.1L2 -5.2Z" fill="#dadada" transform="rotate(270)"/><path d="M-2 -5.2L-1.1 -8.3H1.1L2 -5.2Z" fill="#dadada" transform="rotate(315)"/><circle r="4.75" fill="none" stroke="#dadada" stroke-width="2.3"/></g>
<path d="M1656.2 12v13.2l-7.3 -6.6Z" fill="#ffffff"/>
<text x="24.0" y="104.2" font-size="37" fill="#f2f2f2" stroke="#f2f2f2" stroke-width="0.3" textLength="294.0" lengthAdjust="spacingAndGlyphs">Grayscale - Multi</text>
<text x="148.0" y="155.6" font-size="13.5" fill="#d6d6d6" stroke="#d6d6d6" stroke-width="0.18" textLength="79.0" lengthAdjust="spacingAndGlyphs">DeltaE 2000</text>
<rect x="66.50" y="160.50" width="289.00" height="250.00" fill="#242424"/>
<line x1="105.40" y1="160.50" x2="105.40" y2="410.50" stroke="#8c8c8c" stroke-width="1"/>
<line x1="143.80" y1="160.50" x2="143.80" y2="410.50" stroke="#8c8c8c" stroke-width="1"/>
<line x1="182.20" y1="160.50" x2="182.20" y2="410.50" stroke="#8c8c8c" stroke-width="1"/>
<line x1="220.60" y1="160.50" x2="220.60" y2="410.50" stroke="#8c8c8c" stroke-width="1"/>
<line x1="259.00" y1="160.50" x2="259.00" y2="410.50" stroke="#8c8c8c" stroke-width="1"/>
<line x1="297.40" y1="160.50" x2="297.40" y2="410.50" stroke="#8c8c8c" stroke-width="1"/>
<line x1="335.80" y1="160.50" x2="335.80" y2="410.50" stroke="#8c8c8c" stroke-width="1"/>
<rect x="66.5" y="160.5" width="289.0" height="250.0" fill="none" stroke="#8c8c8c" stroke-width="1.3"/>
<line x1="67.00" y1="410.50" x2="67.00" y2="416.00" stroke="#c8c8c8" stroke-width="1.4"/>
<text x="67.0" y="433.2" font-size="14" fill="#d6d6d6" stroke="#d6d6d6" stroke-width="0.18" text-anchor="middle">0</text>
<line x1="105.40" y1="410.50" x2="105.40" y2="416.00" stroke="#c8c8c8" stroke-width="1.4"/>
<text x="105.4" y="433.2" font-size="14" fill="#d6d6d6" stroke="#d6d6d6" stroke-width="0.18" text-anchor="middle">2</text>
<line x1="143.80" y1="410.50" x2="143.80" y2="416.00" stroke="#c8c8c8" stroke-width="1.4"/>
<text x="143.8" y="433.2" font-size="14" fill="#d6d6d6" stroke="#d6d6d6" stroke-width="0.18" text-anchor="middle">4</text>
<line x1="182.20" y1="410.50" x2="182.20" y2="416.00" stroke="#c8c8c8" stroke-width="1.4"/>
<text x="182.2" y="433.2" font-size="14" fill="#d6d6d6" stroke="#d6d6d6" stroke-width="0.18" text-anchor="middle">6</text>
<line x1="220.60" y1="410.50" x2="220.60" y2="416.00" stroke="#c8c8c8" stroke-width="1.4"/>
<text x="220.6" y="433.2" font-size="14" fill="#d6d6d6" stroke="#d6d6d6" stroke-width="0.18" text-anchor="middle">8</text>
<line x1="259.00" y1="410.50" x2="259.00" y2="416.00" stroke="#c8c8c8" stroke-width="1.4"/>
<text x="259.0" y="433.2" font-size="14" fill="#d6d6d6" stroke="#d6d6d6" stroke-width="0.18" text-anchor="middle">10</text>
<line x1="297.40" y1="410.50" x2="297.40" y2="416.00" stroke="#c8c8c8" stroke-width="1.4"/>
<text x="297.4" y="433.2" font-size="14" fill="#d6d6d6" stroke="#d6d6d6" stroke-width="0.18" text-anchor="middle">12</text>
<line x1="335.80" y1="410.50" x2="335.80" y2="416.00" stroke="#c8c8c8" stroke-width="1.4"/>
<text x="335.8" y="433.2" font-size="14" fill="#d6d6d6" stroke="#d6d6d6" stroke-width="0.18" text-anchor="middle">14</text>
<line x1="60.50" y1="160.50" x2="67.00" y2="160.50" stroke="#d0d0d0" stroke-width="1.6"/>
<line x1="60.50" y1="172.40" x2="67.00" y2="172.40" stroke="#d0d0d0" stroke-width="1.6"/>
<line x1="60.50" y1="184.31" x2="67.00" y2="184.31" stroke="#d0d0d0" stroke-width="1.6"/>
<line x1="60.50" y1="196.21" x2="67.00" y2="196.21" stroke="#d0d0d0" stroke-width="1.6"/>
<line x1="60.50" y1="208.12" x2="67.00" y2="208.12" stroke="#d0d0d0" stroke-width="1.6"/>
<line x1="60.50" y1="220.02" x2="67.00" y2="220.02" stroke="#d0d0d0" stroke-width="1.6"/>
<line x1="60.50" y1="231.93" x2="67.00" y2="231.93" stroke="#d0d0d0" stroke-width="1.6"/>
<line x1="60.50" y1="243.83" x2="67.00" y2="243.83" stroke="#d0d0d0" stroke-width="1.6"/>
<line x1="60.50" y1="255.74" x2="67.00" y2="255.74" stroke="#d0d0d0" stroke-width="1.6"/>
<line x1="60.50" y1="267.64" x2="67.00" y2="267.64" stroke="#d0d0d0" stroke-width="1.6"/>
<line x1="60.50" y1="279.55" x2="67.00" y2="279.55" stroke="#d0d0d0" stroke-width="1.6"/>
<line x1="60.50" y1="291.45" x2="67.00" y2="291.45" stroke="#d0d0d0" stroke-width="1.6"/>
<line x1="60.50" y1="303.36" x2="67.00" y2="303.36" stroke="#d0d0d0" stroke-width="1.6"/>
<line x1="60.50" y1="315.26" x2="67.00" y2="315.26" stroke="#d0d0d0" stroke-width="1.6"/>
<line x1="60.50" y1="327.17" x2="67.00" y2="327.17" stroke="#d0d0d0" stroke-width="1.6"/>
<line x1="60.50" y1="339.07" x2="67.00" y2="339.07" stroke="#d0d0d0" stroke-width="1.6"/>
<line x1="60.50" y1="350.98" x2="67.00" y2="350.98" stroke="#d0d0d0" stroke-width="1.6"/>
<line x1="60.50" y1="362.88" x2="67.00" y2="362.88" stroke="#d0d0d0" stroke-width="1.6"/>
<line x1="60.50" y1="374.79" x2="67.00" y2="374.79" stroke="#d0d0d0" stroke-width="1.6"/>
<line x1="60.50" y1="386.69" x2="67.00" y2="386.69" stroke="#d0d0d0" stroke-width="1.6"/>
<line x1="60.50" y1="398.60" x2="67.00" y2="398.60" stroke="#d0d0d0" stroke-width="1.6"/>
<line x1="60.50" y1="410.50" x2="67.00" y2="410.50" stroke="#d0d0d0" stroke-width="1.6"/>
<rect x="67.8" y="162.45" width="17.02" height="8.4" fill="url(#gb100)" stroke="#000" stroke-width="1.3"/>
<text x="60.0" y="173.4" font-size="14.3" fill="#d6d6d6" stroke="#d6d6d6" stroke-width="0.18" text-anchor="end">100</text>
<rect x="67.8" y="174.36" width="17.60" height="8.4" fill="url(#gb95)" stroke="#000" stroke-width="1.3"/>
<text x="35.0" y="185.3" font-size="14.3" fill="#d6d6d6" stroke="#d6d6d6" stroke-width="0.18" text-anchor="end">95</text>
<rect x="67.8" y="186.26" width="8.96" height="8.4" fill="url(#gb90)" stroke="#000" stroke-width="1.3"/>
<text x="60.0" y="197.2" font-size="14.3" fill="#d6d6d6" stroke="#d6d6d6" stroke-width="0.18" text-anchor="end">90</text>
<rect x="67.8" y="198.17" width="10.88" height="8.4" fill="url(#gb85)" stroke="#000" stroke-width="1.3"/>
<text x="35.0" y="209.1" font-size="14.3" fill="#d6d6d6" stroke="#d6d6d6" stroke-width="0.18" text-anchor="end">85</text>
<rect x="67.8" y="210.07" width="23.36" height="8.4" fill="url(#gb80)" stroke="#000" stroke-width="1.3"/>
<text x="60.0" y="221.0" font-size="14.3" fill="#d6d6d6" stroke="#d6d6d6" stroke-width="0.18" text-anchor="end">80</text>
<rect x="67.8" y="221.98" width="24.32" height="8.4" fill="url(#gb75)" stroke="#000" stroke-width="1.3"/>
<text x="35.0" y="232.9" font-size="14.3" fill="#d6d6d6" stroke="#d6d6d6" stroke-width="0.18" text-anchor="end">75</text>
<rect x="67.8" y="233.88" width="16.06" height="8.4" fill="url(#gb70)" stroke="#000" stroke-width="1.3"/>
<text x="60.0" y="244.8" font-size="14.3" fill="#d6d6d6" stroke="#d6d6d6" stroke-width="0.18" text-anchor="end">70</text>
<rect x="67.8" y="245.79" width="16.06" height="8.4" fill="url(#gb65)" stroke="#000" stroke-width="1.3"/>
<text x="35.0" y="256.7" font-size="14.3" fill="#d6d6d6" stroke="#d6d6d6" stroke-width="0.18" text-anchor="end">65</text>
<rect x="67.8" y="257.69" width="17.98" height="8.4" fill="url(#gb60)" stroke="#000" stroke-width="1.3"/>
<text x="60.0" y="268.6" font-size="14.3" fill="#d6d6d6" stroke="#d6d6d6" stroke-width="0.18" text-anchor="end">60</text>
<rect x="67.8" y="269.60" width="23.36" height="8.4" fill="url(#gb55)" stroke="#000" stroke-width="1.3"/>
<text x="35.0" y="280.5" font-size="14.3" fill="#d6d6d6" stroke="#d6d6d6" stroke-width="0.18" text-anchor="end">55</text>
<rect x="67.8" y="281.50" width="29.25" height="8.4" fill="url(#gb50)" stroke="#000" stroke-width="1.3"/>
<text x="60.0" y="292.4" font-size="14.3" fill="#d6d6d6" stroke="#d6d6d6" stroke-width="0.18" text-anchor="end">50</text>
<rect x="67.8" y="293.40" width="31.02" height="8.4" fill="url(#gb45)" stroke="#000" stroke-width="1.3"/>
<text x="35.0" y="304.3" font-size="14.3" fill="#d6d6d6" stroke="#d6d6d6" stroke-width="0.18" text-anchor="end">45</text>
<rect x="67.8" y="305.31" width="33.36" height="8.4" fill="url(#gb40)" stroke="#000" stroke-width="1.3"/>
<text x="60.0" y="316.2" font-size="14.3" fill="#d6d6d6" stroke="#d6d6d6" stroke-width="0.18" text-anchor="end">40</text>
<rect x="67.8" y="317.21" width="34.19" height="8.4" fill="url(#gb35)" stroke="#000" stroke-width="1.3"/>
<text x="35.0" y="328.1" font-size="14.3" fill="#d6d6d6" stroke="#d6d6d6" stroke-width="0.18" text-anchor="end">35</text>
<rect x="67.8" y="329.12" width="37.84" height="8.4" fill="url(#gb30)" stroke="#000" stroke-width="1.3"/>
<text x="60.0" y="340.0" font-size="14.3" fill="#d6d6d6" stroke="#d6d6d6" stroke-width="0.18" text-anchor="end">30</text>
<rect x="67.8" y="341.02" width="42.10" height="8.4" fill="url(#gb25)" stroke="#000" stroke-width="1.3"/>
<text x="35.0" y="351.9" font-size="14.3" fill="#d6d6d6" stroke="#d6d6d6" stroke-width="0.18" text-anchor="end">25</text>
<rect x="67.8" y="352.93" width="43.31" height="8.4" fill="url(#gb20)" stroke="#000" stroke-width="1.3"/>
<text x="60.0" y="363.8" font-size="14.3" fill="#d6d6d6" stroke="#d6d6d6" stroke-width="0.18" text-anchor="end">20</text>
<rect x="67.8" y="364.83" width="49.99" height="8.4" fill="url(#gb15)" stroke="#000" stroke-width="1.3"/>
<text x="35.0" y="375.7" font-size="14.3" fill="#d6d6d6" stroke="#d6d6d6" stroke-width="0.18" text-anchor="end">15</text>
<rect x="67.8" y="376.74" width="53.57" height="8.4" fill="url(#gb10)" stroke="#000" stroke-width="1.3"/>
<text x="60.0" y="387.6" font-size="14.3" fill="#d6d6d6" stroke="#d6d6d6" stroke-width="0.18" text-anchor="end">10</text>
<rect x="67.8" y="388.64" width="26.33" height="8.4" fill="url(#gb5)" stroke="#000" stroke-width="1.3"/>
<text x="35.0" y="399.5" font-size="14.3" fill="#d6d6d6" stroke="#d6d6d6" stroke-width="0.18" text-anchor="end">5</text>
<rect x="67.8" y="400.55" width="18.32" height="8.4" fill="url(#gb0)" stroke="#000" stroke-width="1.3"/>
<text x="60.0" y="411.4" font-size="14.3" fill="#d6d6d6" stroke="#d6d6d6" stroke-width="0.18" text-anchor="end">0</text>
<text x="653.0" y="88.0" font-size="13.5" fill="#d6d6d6" stroke="#d6d6d6" stroke-width="0.18" textLength="83.0" lengthAdjust="spacingAndGlyphs">RGB Balance</text>
<rect x="421.50" y="93.50" width="572.00" height="318.00" fill="#242424"/>
<line x1="416.00" y1="93.50" x2="421.50" y2="93.50" stroke="#c8c8c8" stroke-width="1.4"/>
<text x="414.5" y="98.9" font-size="14" fill="#d6d6d6" stroke="#d6d6d6" stroke-width="0.18" text-anchor="end">40</text>
<line x1="421.50" y1="133.25" x2="993.50" y2="133.25" stroke="#8c8c8c" stroke-width="1.2"/>
<line x1="416.00" y1="133.25" x2="421.50" y2="133.25" stroke="#c8c8c8" stroke-width="1.4"/>
<text x="414.5" y="138.7" font-size="14" fill="#d6d6d6" stroke="#d6d6d6" stroke-width="0.18" text-anchor="end">30</text>
<line x1="421.50" y1="173.00" x2="993.50" y2="173.00" stroke="#8c8c8c" stroke-width="1.2"/>
<line x1="416.00" y1="173.00" x2="421.50" y2="173.00" stroke="#c8c8c8" stroke-width="1.4"/>
<text x="414.5" y="178.4" font-size="14" fill="#d6d6d6" stroke="#d6d6d6" stroke-width="0.18" text-anchor="end">20</text>
<line x1="421.50" y1="212.75" x2="993.50" y2="212.75" stroke="#8c8c8c" stroke-width="1.2"/>
<line x1="416.00" y1="212.75" x2="421.50" y2="212.75" stroke="#c8c8c8" stroke-width="1.4"/>
<text x="414.5" y="218.2" font-size="14" fill="#d6d6d6" stroke="#d6d6d6" stroke-width="0.18" text-anchor="end">10</text>
<line x1="421.50" y1="252.50" x2="993.50" y2="252.50" stroke="#8c8c8c" stroke-width="1.2"/>
<line x1="416.00" y1="252.50" x2="421.50" y2="252.50" stroke="#c8c8c8" stroke-width="1.4"/>
<text x="414.5" y="257.9" font-size="14" fill="#d6d6d6" stroke="#d6d6d6" stroke-width="0.18" text-anchor="end">0</text>
<line x1="421.50" y1="292.25" x2="993.50" y2="292.25" stroke="#8c8c8c" stroke-width="1.2"/>
<line x1="416.00" y1="292.25" x2="421.50" y2="292.25" stroke="#c8c8c8" stroke-width="1.4"/>
<text x="414.5" y="297.6" font-size="14" fill="#d6d6d6" stroke="#d6d6d6" stroke-width="0.18" text-anchor="end">-10</text>
<line x1="421.50" y1="332.00" x2="993.50" y2="332.00" stroke="#8c8c8c" stroke-width="1.2"/>
<line x1="416.00" y1="332.00" x2="421.50" y2="332.00" stroke="#c8c8c8" stroke-width="1.4"/>
<text x="414.5" y="337.4" font-size="14" fill="#d6d6d6" stroke="#d6d6d6" stroke-width="0.18" text-anchor="end">-20</text>
<line x1="421.50" y1="371.75" x2="993.50" y2="371.75" stroke="#8c8c8c" stroke-width="1.2"/>
<line x1="416.00" y1="371.75" x2="421.50" y2="371.75" stroke="#c8c8c8" stroke-width="1.4"/>
<text x="414.5" y="377.1" font-size="14" fill="#d6d6d6" stroke="#d6d6d6" stroke-width="0.18" text-anchor="end">-30</text>
<line x1="416.00" y1="411.50" x2="421.50" y2="411.50" stroke="#c8c8c8" stroke-width="1.4"/>
<text x="414.5" y="416.9" font-size="14" fill="#d6d6d6" stroke="#d6d6d6" stroke-width="0.18" text-anchor="end">-40</text>
<rect x="421.5" y="93.5" width="572.0" height="318.0" fill="none" stroke="#8c8c8c" stroke-width="1.3"/>
<rect x="421.50" y="91.40" width="572.00" height="1.20" fill="#6c6cc4"/>
<rect x="421.50" y="92.50" width="572.00" height="2.30" fill="#2e2ea2"/>
<rect x="421.50" y="94.80" width="572.00" height="1.20" fill="#20206e"/>
<line x1="421.50" y1="411.50" x2="421.50" y2="417.00" stroke="#c8c8c8" stroke-width="1.4"/>
<text x="421.5" y="432.8" font-size="14" fill="#d6d6d6" stroke="#d6d6d6" stroke-width="0.18" text-anchor="middle">0</text>
<line x1="478.70" y1="411.50" x2="478.70" y2="417.00" stroke="#c8c8c8" stroke-width="1.4"/>
<text x="478.7" y="432.8" font-size="14" fill="#d6d6d6" stroke="#d6d6d6" stroke-width="0.18" text-anchor="middle">10</text>
<line x1="535.90" y1="411.50" x2="535.90" y2="417.00" stroke="#c8c8c8" stroke-width="1.4"/>
<text x="535.9" y="432.8" font-size="14" fill="#d6d6d6" stroke="#d6d6d6" stroke-width="0.18" text-anchor="middle">20</text>
<line x1="593.10" y1="411.50" x2="593.10" y2="417.00" stroke="#c8c8c8" stroke-width="1.4"/>
<text x="593.1" y="432.8" font-size="14" fill="#d6d6d6" stroke="#d6d6d6" stroke-width="0.18" text-anchor="middle">30</text>
<line x1="650.30" y1="411.50" x2="650.30" y2="417.00" stroke="#c8c8c8" stroke-width="1.4"/>
<text x="650.3" y="432.8" font-size="14" fill="#d6d6d6" stroke="#d6d6d6" stroke-width="0.18" text-anchor="middle">40</text>
<line x1="707.50" y1="411.50" x2="707.50" y2="417.00" stroke="#c8c8c8" stroke-width="1.4"/>
<text x="707.5" y="432.8" font-size="14" fill="#d6d6d6" stroke="#d6d6d6" stroke-width="0.18" text-anchor="middle">50</text>
<line x1="764.70" y1="411.50" x2="764.70" y2="417.00" stroke="#c8c8c8" stroke-width="1.4"/>
<text x="764.7" y="432.8" font-size="14" fill="#d6d6d6" stroke="#d6d6d6" stroke-width="0.18" text-anchor="middle">60</text>
<line x1="821.90" y1="411.50" x2="821.90" y2="417.00" stroke="#c8c8c8" stroke-width="1.4"/>
<text x="821.9" y="432.8" font-size="14" fill="#d6d6d6" stroke="#d6d6d6" stroke-width="0.18" text-anchor="middle">70</text>
<line x1="879.10" y1="411.50" x2="879.10" y2="417.00" stroke="#c8c8c8" stroke-width="1.4"/>
<text x="879.1" y="432.8" font-size="14" fill="#d6d6d6" stroke="#d6d6d6" stroke-width="0.18" text-anchor="middle">80</text>
<line x1="936.30" y1="411.50" x2="936.30" y2="417.00" stroke="#c8c8c8" stroke-width="1.4"/>
<text x="936.3" y="432.8" font-size="14" fill="#d6d6d6" stroke="#d6d6d6" stroke-width="0.18" text-anchor="middle">90</text>
<line x1="993.50" y1="411.50" x2="993.50" y2="417.00" stroke="#c8c8c8" stroke-width="1.4"/>
<text x="993.5" y="432.8" font-size="14" fill="#d6d6d6" stroke="#d6d6d6" stroke-width="0.18" text-anchor="middle">100</text>
<text x="1064.5" y="88.0" font-size="13.5" fill="#d6d6d6" stroke="#d6d6d6" stroke-width="0.18" textLength="83.0" lengthAdjust="spacingAndGlyphs">RGB Balance</text>
<rect x="1057.50" y="93.00" width="128.00" height="322.80" fill="#242424"/>
<line x1="1057.50" y1="126.30" x2="1185.50" y2="126.30" stroke="#8c8c8c" stroke-width="1.2"/>
<line x1="1052.00" y1="126.30" x2="1057.50" y2="126.30" stroke="#c8c8c8" stroke-width="1.4"/>
<text x="1050.5" y="131.5" font-size="14" fill="#d6d6d6" stroke="#d6d6d6" stroke-width="0.18" text-anchor="end">104</text>
<line x1="1057.50" y1="190.40" x2="1185.50" y2="190.40" stroke="#8c8c8c" stroke-width="1.2"/>
<line x1="1052.00" y1="190.40" x2="1057.50" y2="190.40" stroke="#c8c8c8" stroke-width="1.4"/>
<text x="1050.5" y="195.6" font-size="14" fill="#d6d6d6" stroke="#d6d6d6" stroke-width="0.18" text-anchor="end">102</text>
<line x1="1057.50" y1="256.00" x2="1185.50" y2="256.00" stroke="#8c8c8c" stroke-width="1.2"/>
<line x1="1052.00" y1="256.00" x2="1057.50" y2="256.00" stroke="#c8c8c8" stroke-width="1.4"/>
<text x="1050.5" y="261.2" font-size="14" fill="#d6d6d6" stroke="#d6d6d6" stroke-width="0.18" text-anchor="end">100</text>
<line x1="1057.50" y1="320.10" x2="1185.50" y2="320.10" stroke="#8c8c8c" stroke-width="1.2"/>
<line x1="1052.00" y1="320.10" x2="1057.50" y2="320.10" stroke="#c8c8c8" stroke-width="1.4"/>
<text x="1050.5" y="325.3" font-size="14" fill="#d6d6d6" stroke="#d6d6d6" stroke-width="0.18" text-anchor="end">98</text>
<line x1="1057.50" y1="385.00" x2="1185.50" y2="385.00" stroke="#8c8c8c" stroke-width="1.2"/>
<line x1="1052.00" y1="385.00" x2="1057.50" y2="385.00" stroke="#c8c8c8" stroke-width="1.4"/>
<text x="1050.5" y="390.2" font-size="14" fill="#d6d6d6" stroke="#d6d6d6" stroke-width="0.18" text-anchor="end">96</text>
<rect x="1057.5" y="93.0" width="128.0" height="322.8" fill="none" stroke="#8c8c8c" stroke-width="1.3"/>
<line x1="1057.50" y1="415.80" x2="1057.50" y2="421.30" stroke="#c8c8c8" stroke-width="1.4"/>
<line x1="1185.50" y1="415.80" x2="1185.50" y2="421.30" stroke="#c8c8c8" stroke-width="1.4"/>
<rect x="1070.3" y="242.6" width="32.3" height="173.2" fill="url(#gR)" stroke="#000" stroke-width="1.4"/>
<rect x="1104.2" y="260.3" width="32.4" height="155.5" fill="url(#gG)" stroke="#000" stroke-width="1.4"/>
<rect x="1138.3" y="250.4" width="32.4" height="165.4" fill="url(#gB)" stroke="#000" stroke-width="1.4"/>
<line x1="1057.50" y1="415.80" x2="1185.50" y2="415.80" stroke="#8c8c8c" stroke-width="1.3"/>
<text x="1121.0" y="432.8" font-size="14" fill="#d6d6d6" stroke="#d6d6d6" stroke-width="0.18" text-anchor="middle">100</text>
<text x="1375.5" y="88.0" font-size="13.5" fill="#d6d6d6" stroke="#d6d6d6" stroke-width="0.18" textLength="108.5" lengthAdjust="spacingAndGlyphs">Gamma Log/Log</text>
<rect x="1243.50" y="93.70" width="398.00" height="318.10" fill="#242424"/>
<line x1="1238.00" y1="93.70" x2="1243.50" y2="93.70" stroke="#c8c8c8" stroke-width="1.4"/>
<text x="1236.5" y="98.9" font-size="14" fill="#d6d6d6" stroke="#d6d6d6" stroke-width="0.18" text-anchor="end">2,8</text>
<line x1="1243.50" y1="158.00" x2="1641.50" y2="158.00" stroke="#8c8c8c" stroke-width="1.2"/>
<line x1="1238.00" y1="158.00" x2="1243.50" y2="158.00" stroke="#c8c8c8" stroke-width="1.4"/>
<text x="1236.5" y="163.2" font-size="14" fill="#d6d6d6" stroke="#d6d6d6" stroke-width="0.18" text-anchor="end">2,6</text>
<line x1="1243.50" y1="220.80" x2="1641.50" y2="220.80" stroke="#8c8c8c" stroke-width="1.2"/>
<line x1="1238.00" y1="220.80" x2="1243.50" y2="220.80" stroke="#c8c8c8" stroke-width="1.4"/>
<text x="1236.5" y="226.0" font-size="14" fill="#d6d6d6" stroke="#d6d6d6" stroke-width="0.18" text-anchor="end">2,4</text>
<line x1="1243.50" y1="284.80" x2="1641.50" y2="284.80" stroke="#8c8c8c" stroke-width="1.2"/>
<line x1="1238.00" y1="284.80" x2="1243.50" y2="284.80" stroke="#c8c8c8" stroke-width="1.4"/>
<text x="1236.5" y="290.0" font-size="14" fill="#d6d6d6" stroke="#d6d6d6" stroke-width="0.18" text-anchor="end">2,2</text>
<line x1="1243.50" y1="347.90" x2="1641.50" y2="347.90" stroke="#8c8c8c" stroke-width="1.2"/>
<line x1="1238.00" y1="347.90" x2="1243.50" y2="347.90" stroke="#c8c8c8" stroke-width="1.4"/>
<text x="1236.5" y="353.1" font-size="14" fill="#d6d6d6" stroke="#d6d6d6" stroke-width="0.18" text-anchor="end">2</text>
<line x1="1238.00" y1="411.80" x2="1243.50" y2="411.80" stroke="#c8c8c8" stroke-width="1.4"/>
<text x="1236.5" y="417.0" font-size="14" fill="#d6d6d6" stroke="#d6d6d6" stroke-width="0.18" text-anchor="end">1,8</text>
<rect x="1243.5" y="93.7" width="398.0" height="318.1" fill="none" stroke="#8c8c8c" stroke-width="1.3"/>
<line x1="1243.20" y1="411.80" x2="1243.20" y2="417.30" stroke="#c8c8c8" stroke-width="1.4"/>
<text x="1243.2" y="432.8" font-size="14" fill="#d6d6d6" stroke="#d6d6d6" stroke-width="0.18" text-anchor="middle">0</text>
<line x1="1322.80" y1="411.80" x2="1322.80" y2="417.30" stroke="#c8c8c8" stroke-width="1.4"/>
<text x="1322.8" y="432.8" font-size="14" fill="#d6d6d6" stroke="#d6d6d6" stroke-width="0.18" text-anchor="middle">20</text>
<line x1="1402.40" y1="411.80" x2="1402.40" y2="417.30" stroke="#c8c8c8" stroke-width="1.4"/>
<text x="1402.4" y="432.8" font-size="14" fill="#d6d6d6" stroke="#d6d6d6" stroke-width="0.18" text-anchor="middle">40</text>
<line x1="1482.00" y1="411.80" x2="1482.00" y2="417.30" stroke="#c8c8c8" stroke-width="1.4"/>
<text x="1482.0" y="432.8" font-size="14" fill="#d6d6d6" stroke="#d6d6d6" stroke-width="0.18" text-anchor="middle">60</text>
<line x1="1561.60" y1="411.80" x2="1561.60" y2="417.30" stroke="#c8c8c8" stroke-width="1.4"/>
<text x="1561.6" y="432.8" font-size="14" fill="#d6d6d6" stroke="#d6d6d6" stroke-width="0.18" text-anchor="middle">80</text>
<line x1="1641.20" y1="411.80" x2="1641.20" y2="417.30" stroke="#c8c8c8" stroke-width="1.4"/>
<text x="1641.2" y="432.8" font-size="14" fill="#d6d6d6" stroke="#d6d6d6" stroke-width="0.18" text-anchor="middle">100</text>
<polyline clip-path="url(#cGam)" points="1243.2,576.6 1263.1,315.9 1283.0,269.5 1302.9,260.9 1322.8,254.9 1342.7,253.2 1362.6,251.3 1382.5,249.8 1402.4,248.0 1422.3,247.6 1442.2,248.5 1462.1,245.7 1482.0,249.7 1501.9,248.7 1521.8,248.7 1541.7,245.6 1561.6,227.3 1581.5,216.7 1601.4,204.0 1621.3,172.7 1641.2,259.2" fill="none" stroke="#8a8a8a" stroke-width="2.8" stroke-linejoin="round"/>
<polyline clip-path="url(#cGam)" points="1258.0,411.0 1260.0,402.0 1262.0,394.0 1264.0,387.0 1266.0,380.0 1269.0,372.5 1272.0,366.0 1276.0,357.5 1280.0,350.0 1284.0,343.5 1288.0,338.0 1293.0,331.5 1298.0,326.0 1305.0,320.0 1312.0,315.0 1319.0,310.3 1326.0,306.0 1336.0,301.0 1346.0,297.0 1356.0,293.3 1366.0,290.0 1376.0,287.0 1386.0,284.5 1400.0,281.8 1416.0,278.5 1431.7,275.6 1463.5,271.0 1495.2,267.5 1526.9,265.0 1558.7,263.0 1590.4,261.2 1622.1,259.9 1641.0,259.2" fill="none" stroke="#f6f61c" stroke-width="3" stroke-linejoin="round"/>
<text x="86.0" y="473.8" font-size="29" fill="#f0f0f0" stroke="#f0f0f0" stroke-width="0.3" textLength="215.0" lengthAdjust="spacingAndGlyphs">Avg dE2000: 1,5</text>
<text x="497.6" y="473.8" font-size="29" fill="#f0f0f0" stroke="#f0f0f0" stroke-width="0.3" textLength="188.0" lengthAdjust="spacingAndGlyphs">Avg CCT: 6747</text>
<text x="872.0" y="473.8" font-size="29" fill="#f0f0f0" stroke="#f0f0f0" stroke-width="0.3" textLength="275.0" lengthAdjust="spacingAndGlyphs">Contrast Ratio: 1057</text>
<text x="1272.0" y="473.8" font-size="29" fill="#f0f0f0" stroke="#f0f0f0" stroke-width="0.3" textLength="314.5" lengthAdjust="spacingAndGlyphs">Average Gamma: 2,319</text>
<rect x="0.00" y="494.00" width="1664.00" height="131.00" fill="#000000"/>
<line x1="95.50" y1="494.00" x2="95.50" y2="625.00" stroke="#161616" stroke-width="1"/>
<line x1="1654.50" y1="494.00" x2="1654.50" y2="625.00" stroke="#101010" stroke-width="1"/>
<rect x="113.00" y="500.00" width="63.00" height="51.00" fill="rgb(3,3,6)"/>
<rect x="113.00" y="550.50" width="63.00" height="51.30" fill="rgb(0,0,0)"/>
<rect x="113.50" y="500.5" width="62" height="101" fill="none" stroke="#f8f8f8" stroke-width="1" shape-rendering="crispEdges"/>
<text x="144.8" y="616.4" font-size="13" fill="#f4f4f4" stroke="#f4f4f4" stroke-width="0.18" text-anchor="middle">0</text>
<rect x="187.00" y="500.00" width="63.00" height="51.00" fill="rgb(6,6,9)"/>
<rect x="187.00" y="550.50" width="63.00" height="51.30" fill="rgb(13,13,13)"/>
<rect x="187.50" y="500.5" width="62" height="101" fill="none" stroke="#f8f8f8" stroke-width="1" shape-rendering="crispEdges"/>
<text x="218.3" y="616.4" font-size="13" fill="#f4f4f4" stroke="#f4f4f4" stroke-width="0.18" text-anchor="middle">5</text>
<rect x="260.00" y="500.00" width="63.00" height="51.00" fill="rgb(18,18,18)"/>
<rect x="260.00" y="550.50" width="63.00" height="51.30" fill="rgb(26,26,26)"/>
<rect x="260.50" y="500.5" width="62" height="101" fill="none" stroke="#f8f8f8" stroke-width="1" shape-rendering="crispEdges"/>
<text x="291.9" y="616.4" font-size="13" fill="#f4f4f4" stroke="#f4f4f4" stroke-width="0.18" text-anchor="middle">10</text>
<rect x="334.00" y="500.00" width="63.00" height="51.00" fill="rgb(30,30,30)"/>
<rect x="334.00" y="550.50" width="63.00" height="51.30" fill="rgb(38,38,38)"/>
<rect x="334.50" y="500.5" width="62" height="101" fill="none" stroke="#f8f8f8" stroke-width="1" shape-rendering="crispEdges"/>
<text x="365.5" y="616.4" font-size="13" fill="#f4f4f4" stroke="#f4f4f4" stroke-width="0.18" text-anchor="middle">15</text>
<rect x="408.00" y="500.00" width="63.00" height="51.00" fill="rgb(44,44,44)"/>
<rect x="408.00" y="550.50" width="63.00" height="51.30" fill="rgb(51,51,51)"/>
<rect x="408.50" y="500.5" width="62" height="101" fill="none" stroke="#f8f8f8" stroke-width="1" shape-rendering="crispEdges"/>
<text x="439.1" y="616.4" font-size="13" fill="#f4f4f4" stroke="#f4f4f4" stroke-width="0.18" text-anchor="middle">20</text>
<rect x="481.00" y="500.00" width="63.00" height="51.00" fill="rgb(58,58,58)"/>
<rect x="481.00" y="550.50" width="63.00" height="51.30" fill="rgb(64,64,64)"/>
<rect x="481.50" y="500.5" width="62" height="101" fill="none" stroke="#f8f8f8" stroke-width="1" shape-rendering="crispEdges"/>
<text x="512.8" y="616.4" font-size="13" fill="#f4f4f4" stroke="#f4f4f4" stroke-width="0.18" text-anchor="middle">25</text>
<rect x="555.00" y="500.00" width="63.00" height="51.00" fill="rgb(70,70,70)"/>
<rect x="555.00" y="550.50" width="63.00" height="51.30" fill="rgb(76,76,76)"/>
<rect x="555.50" y="500.5" width="62" height="101" fill="none" stroke="#f8f8f8" stroke-width="1" shape-rendering="crispEdges"/>
<text x="586.3" y="616.4" font-size="13" fill="#f4f4f4" stroke="#f4f4f4" stroke-width="0.18" text-anchor="middle">30</text>
<rect x="628.00" y="500.00" width="63.00" height="51.00" fill="rgb(84,84,84)"/>
<rect x="628.00" y="550.50" width="63.00" height="51.30" fill="rgb(89,89,89)"/>
<rect x="628.50" y="500.5" width="62" height="101" fill="none" stroke="#f8f8f8" stroke-width="1" shape-rendering="crispEdges"/>
<text x="659.9" y="616.4" font-size="13" fill="#f4f4f4" stroke="#f4f4f4" stroke-width="0.18" text-anchor="middle">35</text>
<rect x="702.00" y="500.00" width="63.00" height="51.00" fill="rgb(97,97,97)"/>
<rect x="702.00" y="550.50" width="63.00" height="51.30" fill="rgb(102,102,102)"/>
<rect x="702.50" y="500.5" width="62" height="101" fill="none" stroke="#f8f8f8" stroke-width="1" shape-rendering="crispEdges"/>
<text x="733.5" y="616.4" font-size="13" fill="#f4f4f4" stroke="#f4f4f4" stroke-width="0.18" text-anchor="middle">40</text>
<rect x="776.00" y="500.00" width="63.00" height="51.00" fill="rgb(111,111,111)"/>
<rect x="776.00" y="550.50" width="63.00" height="51.30" fill="rgb(115,115,115)"/>
<rect x="776.50" y="500.5" width="62" height="101" fill="none" stroke="#f8f8f8" stroke-width="1" shape-rendering="crispEdges"/>
<text x="807.1" y="616.4" font-size="13" fill="#f4f4f4" stroke="#f4f4f4" stroke-width="0.18" text-anchor="middle">45</text>
<rect x="849.00" y="500.00" width="63.00" height="51.00" fill="rgb(125,125,125)"/>
<rect x="849.00" y="550.50" width="63.00" height="51.30" fill="rgb(127,127,127)"/>
<rect x="849.50" y="500.5" width="62" height="101" fill="none" stroke="#f8f8f8" stroke-width="1" shape-rendering="crispEdges"/>
<text x="880.8" y="616.4" font-size="13" fill="#f4f4f4" stroke="#f4f4f4" stroke-width="0.18" text-anchor="middle">50</text>
<rect x="923.00" y="500.00" width="63.00" height="51.00" fill="rgb(137,137,137)"/>
<rect x="923.00" y="550.50" width="63.00" height="51.30" fill="rgb(140,140,140)"/>
<rect x="923.50" y="500.5" width="62" height="101" fill="none" stroke="#f8f8f8" stroke-width="1" shape-rendering="crispEdges"/>
<text x="954.3" y="616.4" font-size="13" fill="#f4f4f4" stroke="#f4f4f4" stroke-width="0.18" text-anchor="middle">55</text>
<rect x="996.00" y="500.00" width="63.00" height="51.00" fill="rgb(151,151,151)"/>
<rect x="996.00" y="550.50" width="63.00" height="51.30" fill="rgb(153,153,153)"/>
<rect x="996.50" y="500.5" width="62" height="101" fill="none" stroke="#f8f8f8" stroke-width="1" shape-rendering="crispEdges"/>
<text x="1027.9" y="616.4" font-size="13" fill="#f4f4f4" stroke="#f4f4f4" stroke-width="0.18" text-anchor="middle">60</text>
<rect x="1070.00" y="500.00" width="63.00" height="51.00" fill="rgb(164,164,164)"/>
<rect x="1070.00" y="550.50" width="63.00" height="51.30" fill="rgb(166,166,166)"/>
<rect x="1070.50" y="500.5" width="62" height="101" fill="none" stroke="#f8f8f8" stroke-width="1" shape-rendering="crispEdges"/>
<text x="1101.5" y="616.4" font-size="13" fill="#f4f4f4" stroke="#f4f4f4" stroke-width="0.18" text-anchor="middle">65</text>
<rect x="1144.00" y="500.00" width="63.00" height="51.00" fill="rgb(177,177,177)"/>
<rect x="1144.00" y="550.50" width="63.00" height="51.30" fill="rgb(178,178,178)"/>
<rect x="1144.50" y="500.5" width="62" height="101" fill="none" stroke="#f8f8f8" stroke-width="1" shape-rendering="crispEdges"/>
<text x="1175.1" y="616.4" font-size="13" fill="#f4f4f4" stroke="#f4f4f4" stroke-width="0.18" text-anchor="middle">70</text>
<rect x="1217.00" y="500.00" width="63.00" height="51.00" fill="rgb(190,190,190)"/>
<rect x="1217.00" y="550.50" width="63.00" height="51.30" fill="rgb(191,191,191)"/>
<rect x="1217.50" y="500.5" width="62" height="101" fill="none" stroke="#c6c6c6" stroke-width="1" shape-rendering="crispEdges"/>
<text x="1248.8" y="616.4" font-size="13" fill="#f4f4f4" stroke="#f4f4f4" stroke-width="0.18" text-anchor="middle">75</text>
<rect x="1291.00" y="500.00" width="63.00" height="51.00" fill="rgb(202,202,202)"/>
<rect x="1291.00" y="550.50" width="63.00" height="51.30" fill="rgb(204,204,204)"/>
<rect x="1291.50" y="500.5" width="62" height="101" fill="none" stroke="#c6c6c6" stroke-width="1" shape-rendering="crispEdges"/>
<text x="1322.3" y="616.4" font-size="13" fill="#f4f4f4" stroke="#f4f4f4" stroke-width="0.18" text-anchor="middle">80</text>
<rect x="1364.00" y="500.00" width="63.00" height="51.00" fill="rgb(214,214,214)"/>
<rect x="1364.00" y="550.50" width="63.00" height="51.30" fill="rgb(217,217,217)"/>
<rect x="1364.50" y="500.5" width="62" height="101" fill="none" stroke="#c6c6c6" stroke-width="1" shape-rendering="crispEdges"/>
<text x="1395.9" y="616.4" font-size="13" fill="#f4f4f4" stroke="#f4f4f4" stroke-width="0.18" text-anchor="middle">85</text>
<rect x="1438.00" y="500.00" width="63.00" height="51.00" fill="rgb(228,228,228)"/>
<rect x="1438.00" y="550.50" width="63.00" height="51.30" fill="rgb(229,229,229)"/>
<rect x="1438.50" y="500.5" width="62" height="101" fill="none" stroke="#c6c6c6" stroke-width="1" shape-rendering="crispEdges"/>
<text x="1469.5" y="616.4" font-size="13" fill="#f4f4f4" stroke="#f4f4f4" stroke-width="0.18" text-anchor="middle">90</text>
<rect x="1512.00" y="500.00" width="63.00" height="51.00" fill="rgb(241,241,241)"/>
<rect x="1512.00" y="550.50" width="63.00" height="51.30" fill="rgb(242,242,242)"/>
<rect x="1512.50" y="500.5" width="62" height="101" fill="none" stroke="#c6c6c6" stroke-width="1" shape-rendering="crispEdges"/>
<text x="1543.1" y="616.4" font-size="13" fill="#f4f4f4" stroke="#f4f4f4" stroke-width="0.18" text-anchor="middle">95</text>
<rect x="1585.00" y="500.00" width="63.00" height="51.00" fill="rgb(255,255,255)"/>
<rect x="1585.00" y="550.50" width="63.00" height="51.30" fill="rgb(255,255,255)"/>
<rect x="1585.50" y="500.5" width="62" height="101" fill="none" stroke="#c6c6c6" stroke-width="1" shape-rendering="crispEdges"/>
<text x="1616.8" y="616.4" font-size="13" fill="#f4f4f4" stroke="#f4f4f4" stroke-width="0.18" text-anchor="middle">100</text>
<text transform="translate(108.7 539.5) rotate(-90)" font-size="13" fill="#f4f4f4" stroke="#f4f4f4" stroke-width="0.45" textLength="34.5" lengthAdjust="spacingAndGlyphs">Actual</text>
<text transform="translate(108.7 596) rotate(-90)" font-size="13" fill="#f4f4f4" stroke="#f4f4f4" stroke-width="0.45" textLength="33.5" lengthAdjust="spacingAndGlyphs">Target</text>
<text x="21.5" y="691.5" font-size="27.5" fill="#f0f0f0" stroke="#f0f0f0" stroke-width="0.3" textLength="217.5" lengthAdjust="spacingAndGlyphs">Current Reading</text>
<text x="21.5" y="733.3" font-size="24" fill="#f0f0f0" stroke="#f0f0f0" stroke-width="0.3" textLength="101.5" lengthAdjust="spacingAndGlyphs">x: 0,3133</text>
<text x="171.0" y="733.3" font-size="24" fill="#f0f0f0" stroke="#f0f0f0" stroke-width="0.3" textLength="102.0" lengthAdjust="spacingAndGlyphs">y: 0,3283</text>
<text x="21.5" y="767.3" font-size="24" fill="#f0f0f0" stroke="#f0f0f0" stroke-width="0.3" textLength="110.0" lengthAdjust="spacingAndGlyphs">u': 0,1985</text>
<text x="171.5" y="767.3" font-size="24" fill="#f0f0f0" stroke="#f0f0f0" stroke-width="0.3" textLength="94.0" lengthAdjust="spacingAndGlyphs">v': 0,468</text>
<text x="21.5" y="801.4" font-size="24" fill="#f0f0f0" stroke="#f0f0f0" stroke-width="0.3" textLength="187.0" lengthAdjust="spacingAndGlyphs">cd/m²: 306,0208</text>
<text x="21.5" y="835.4" font-size="24" fill="#f0f0f0" stroke="#f0f0f0" stroke-width="0.3" textLength="153.0" lengthAdjust="spacingAndGlyphs">ΔE 2000: 0,97</text>
<text x="436.0" y="657.3" font-size="13.5" fill="#d6d6d6" stroke="#d6d6d6" stroke-width="0.18" textLength="75.5" lengthAdjust="spacingAndGlyphs">CIE 1931 xy</text>
<rect x="364.50" y="662.00" width="252.50" height="3.00" fill="url(#c0)" shape-rendering="crispEdges" clip-path="url(#cCie)"/>
<rect x="364.50" y="665.00" width="252.50" height="3.00" fill="url(#c1)" shape-rendering="crispEdges" clip-path="url(#cCie)"/>
<rect x="364.50" y="668.00" width="252.50" height="3.00" fill="url(#c2)" shape-rendering="crispEdges" clip-path="url(#cCie)"/>
<rect x="364.50" y="671.00" width="252.50" height="3.00" fill="url(#c3)" shape-rendering="crispEdges" clip-path="url(#cCie)"/>
<rect x="364.50" y="674.00" width="252.50" height="3.00" fill="url(#c4)" shape-rendering="crispEdges" clip-path="url(#cCie)"/>
<rect x="364.50" y="677.00" width="252.50" height="3.00" fill="url(#c5)" shape-rendering="crispEdges" clip-path="url(#cCie)"/>
<rect x="364.50" y="680.00" width="252.50" height="3.00" fill="url(#c6)" shape-rendering="crispEdges" clip-path="url(#cCie)"/>
<rect x="364.50" y="683.00" width="252.50" height="3.00" fill="url(#c7)" shape-rendering="crispEdges" clip-path="url(#cCie)"/>
<rect x="364.50" y="686.00" width="252.50" height="3.00" fill="url(#c8)" shape-rendering="crispEdges" clip-path="url(#cCie)"/>
<rect x="364.50" y="689.00" width="252.50" height="3.00" fill="url(#c9)" shape-rendering="crispEdges" clip-path="url(#cCie)"/>
<rect x="364.50" y="692.00" width="252.50" height="3.00" fill="url(#c10)" shape-rendering="crispEdges" clip-path="url(#cCie)"/>
<rect x="364.50" y="695.00" width="252.50" height="3.00" fill="url(#c11)" shape-rendering="crispEdges" clip-path="url(#cCie)"/>
<rect x="364.50" y="698.00" width="252.50" height="3.00" fill="url(#c12)" shape-rendering="crispEdges" clip-path="url(#cCie)"/>
<rect x="364.50" y="701.00" width="252.50" height="3.00" fill="url(#c13)" shape-rendering="crispEdges" clip-path="url(#cCie)"/>
<rect x="364.50" y="704.00" width="252.50" height="3.00" fill="url(#c14)" shape-rendering="crispEdges" clip-path="url(#cCie)"/>
<rect x="364.50" y="707.00" width="252.50" height="3.00" fill="url(#c15)" shape-rendering="crispEdges" clip-path="url(#cCie)"/>
<rect x="364.50" y="710.00" width="252.50" height="3.00" fill="url(#c16)" shape-rendering="crispEdges" clip-path="url(#cCie)"/>
<rect x="364.50" y="713.00" width="252.50" height="3.00" fill="url(#c17)" shape-rendering="crispEdges" clip-path="url(#cCie)"/>
<rect x="364.50" y="716.00" width="252.50" height="3.00" fill="url(#c18)" shape-rendering="crispEdges" clip-path="url(#cCie)"/>
<rect x="364.50" y="719.00" width="252.50" height="3.00" fill="url(#c19)" shape-rendering="crispEdges" clip-path="url(#cCie)"/>
<rect x="364.50" y="722.00" width="252.50" height="3.00" fill="url(#c20)" shape-rendering="crispEdges" clip-path="url(#cCie)"/>
<rect x="364.50" y="725.00" width="252.50" height="3.00" fill="url(#c21)" shape-rendering="crispEdges" clip-path="url(#cCie)"/>
<rect x="364.50" y="728.00" width="252.50" height="3.00" fill="url(#c22)" shape-rendering="crispEdges" clip-path="url(#cCie)"/>
<rect x="364.50" y="731.00" width="252.50" height="3.00" fill="url(#c23)" shape-rendering="crispEdges" clip-path="url(#cCie)"/>
<rect x="364.50" y="734.00" width="252.50" height="3.00" fill="url(#c24)" shape-rendering="crispEdges" clip-path="url(#cCie)"/>
<rect x="364.50" y="737.00" width="252.50" height="3.00" fill="url(#c25)" shape-rendering="crispEdges" clip-path="url(#cCie)"/>
<rect x="364.50" y="740.00" width="252.50" height="3.00" fill="url(#c26)" shape-rendering="crispEdges" clip-path="url(#cCie)"/>
<rect x="364.50" y="743.00" width="252.50" height="3.00" fill="url(#c27)" shape-rendering="crispEdges" clip-path="url(#cCie)"/>
<rect x="364.50" y="746.00" width="252.50" height="3.00" fill="url(#c28)" shape-rendering="crispEdges" clip-path="url(#cCie)"/>
<rect x="364.50" y="749.00" width="252.50" height="3.00" fill="url(#c29)" shape-rendering="crispEdges" clip-path="url(#cCie)"/>
<rect x="364.50" y="752.00" width="252.50" height="3.00" fill="url(#c30)" shape-rendering="crispEdges" clip-path="url(#cCie)"/>
<rect x="364.50" y="755.00" width="252.50" height="3.00" fill="url(#c31)" shape-rendering="crispEdges" clip-path="url(#cCie)"/>
<rect x="364.50" y="758.00" width="252.50" height="3.00" fill="url(#c32)" shape-rendering="crispEdges" clip-path="url(#cCie)"/>
<rect x="364.50" y="761.00" width="252.50" height="3.00" fill="url(#c33)" shape-rendering="crispEdges" clip-path="url(#cCie)"/>
<rect x="364.50" y="764.00" width="252.50" height="3.00" fill="url(#c34)" shape-rendering="crispEdges" clip-path="url(#cCie)"/>
<rect x="364.50" y="767.00" width="252.50" height="3.00" fill="url(#c35)" shape-rendering="crispEdges" clip-path="url(#cCie)"/>
<rect x="364.50" y="770.00" width="252.50" height="3.00" fill="url(#c36)" shape-rendering="crispEdges" clip-path="url(#cCie)"/>
<rect x="364.50" y="773.00" width="252.50" height="3.00" fill="url(#c37)" shape-rendering="crispEdges" clip-path="url(#cCie)"/>
<rect x="364.50" y="776.00" width="252.50" height="3.00" fill="url(#c38)" shape-rendering="crispEdges" clip-path="url(#cCie)"/>
<rect x="364.50" y="779.00" width="252.50" height="3.00" fill="url(#c39)" shape-rendering="crispEdges" clip-path="url(#cCie)"/>
<rect x="364.50" y="782.00" width="252.50" height="3.00" fill="url(#c40)" shape-rendering="crispEdges" clip-path="url(#cCie)"/>
<rect x="364.50" y="785.00" width="252.50" height="3.00" fill="url(#c41)" shape-rendering="crispEdges" clip-path="url(#cCie)"/>
<rect x="364.50" y="788.00" width="252.50" height="3.00" fill="url(#c42)" shape-rendering="crispEdges" clip-path="url(#cCie)"/>
<rect x="364.50" y="791.00" width="252.50" height="3.00" fill="url(#c43)" shape-rendering="crispEdges" clip-path="url(#cCie)"/>
<rect x="364.50" y="794.00" width="252.50" height="3.00" fill="url(#c44)" shape-rendering="crispEdges" clip-path="url(#cCie)"/>
<rect x="364.50" y="797.00" width="252.50" height="3.00" fill="url(#c45)" shape-rendering="crispEdges" clip-path="url(#cCie)"/>
<rect x="364.50" y="800.00" width="252.50" height="3.00" fill="url(#c46)" shape-rendering="crispEdges" clip-path="url(#cCie)"/>
<rect x="364.50" y="803.00" width="252.50" height="3.00" fill="url(#c47)" shape-rendering="crispEdges" clip-path="url(#cCie)"/>
<rect x="364.50" y="806.00" width="252.50" height="3.00" fill="url(#c48)" shape-rendering="crispEdges" clip-path="url(#cCie)"/>
<rect x="364.50" y="809.00" width="252.50" height="3.00" fill="url(#c49)" shape-rendering="crispEdges" clip-path="url(#cCie)"/>
<rect x="364.50" y="812.00" width="252.50" height="3.00" fill="url(#c50)" shape-rendering="crispEdges" clip-path="url(#cCie)"/>
<rect x="364.50" y="815.00" width="252.50" height="3.00" fill="url(#c51)" shape-rendering="crispEdges" clip-path="url(#cCie)"/>
<rect x="364.50" y="818.00" width="252.50" height="3.00" fill="url(#c52)" shape-rendering="crispEdges" clip-path="url(#cCie)"/>
<rect x="364.50" y="821.00" width="252.50" height="3.00" fill="url(#c53)" shape-rendering="crispEdges" clip-path="url(#cCie)"/>
<rect x="364.50" y="824.00" width="252.50" height="3.00" fill="url(#c54)" shape-rendering="crispEdges" clip-path="url(#cCie)"/>
<rect x="364.50" y="827.00" width="252.50" height="3.00" fill="url(#c55)" shape-rendering="crispEdges" clip-path="url(#cCie)"/>
<rect x="364.5" y="662.7" width="252.5" height="166.0" fill="none" stroke="#9a9a9a" stroke-width="1.2"/>
<path clip-path="url(#cCie)" d="M392 832Q505 757 617 688.8" fill="none" stroke="#000" stroke-width="2.6"/>
<line x1="375.50" y1="828.70" x2="375.50" y2="834.20" stroke="#c8c8c8" stroke-width="1.4"/>
<text x="375.5" y="849.7" font-size="14" fill="#d6d6d6" stroke="#d6d6d6" stroke-width="0.18" text-anchor="middle">0,29</text>
<line x1="426.00" y1="828.70" x2="426.00" y2="834.20" stroke="#c8c8c8" stroke-width="1.4"/>
<text x="426.0" y="849.7" font-size="14" fill="#d6d6d6" stroke="#d6d6d6" stroke-width="0.18" text-anchor="middle">0,3</text>
<line x1="476.40" y1="828.70" x2="476.40" y2="834.20" stroke="#c8c8c8" stroke-width="1.4"/>
<text x="476.4" y="849.7" font-size="14" fill="#d6d6d6" stroke="#d6d6d6" stroke-width="0.18" text-anchor="middle">0,31</text>
<line x1="526.50" y1="828.70" x2="526.50" y2="834.20" stroke="#c8c8c8" stroke-width="1.4"/>
<text x="526.5" y="849.7" font-size="14" fill="#d6d6d6" stroke="#d6d6d6" stroke-width="0.18" text-anchor="middle">0,32</text>
<line x1="577.00" y1="828.70" x2="577.00" y2="834.20" stroke="#c8c8c8" stroke-width="1.4"/>
<text x="577.0" y="849.7" font-size="14" fill="#d6d6d6" stroke="#d6d6d6" stroke-width="0.18" text-anchor="middle">0,33</text>
<line x1="359.00" y1="710.00" x2="364.50" y2="710.00" stroke="#c8c8c8" stroke-width="1.4"/>
<text x="358.0" y="715.2" font-size="14" fill="#d6d6d6" stroke="#d6d6d6" stroke-width="0.18" text-anchor="end">0,34</text>
<line x1="359.00" y1="777.30" x2="364.50" y2="777.30" stroke="#c8c8c8" stroke-width="1.4"/>
<text x="358.0" y="782.5" font-size="14" fill="#d6d6d6" stroke="#d6d6d6" stroke-width="0.18" text-anchor="end">0,32</text>
<circle cx="461.7" cy="802.3" r="4.3" fill="rgb(26,26,26)" stroke="#111" stroke-width="1"/>
<circle cx="478.8" cy="770.3" r="4.3" fill="rgb(38,38,38)" stroke="#111" stroke-width="1"/>
<circle cx="491.4" cy="752.1" r="4.3" fill="rgb(51,51,51)" stroke="#111" stroke-width="1"/>
<circle cx="481.3" cy="759.5" r="4.3" fill="rgb(64,64,64)" stroke="#111" stroke-width="1"/>
<circle cx="477.8" cy="755.2" r="4.3" fill="rgb(76,76,76)" stroke="#111" stroke-width="1"/>
<circle cx="481.3" cy="749.4" r="4.3" fill="rgb(89,89,89)" stroke="#111" stroke-width="1"/>
<circle cx="480.3" cy="748.4" r="4.3" fill="rgb(102,102,102)" stroke="#111" stroke-width="1"/>
<circle cx="482.3" cy="746.7" r="4.3" fill="rgb(115,115,115)" stroke="#111" stroke-width="1"/>
<circle cx="473.8" cy="750.8" r="4.3" fill="rgb(127,127,127)" stroke="#111" stroke-width="1"/>
<circle cx="475.3" cy="749.4" r="4.3" fill="rgb(140,140,140)" stroke="#111" stroke-width="1"/>
<circle cx="476.3" cy="748.4" r="4.3" fill="rgb(153,153,153)" stroke="#111" stroke-width="1"/>
<circle cx="474.8" cy="749.1" r="4.3" fill="rgb(166,166,166)" stroke="#111" stroke-width="1"/>
<circle cx="477.8" cy="752.8" r="4.3" fill="rgb(178,178,178)" stroke="#111" stroke-width="1"/>
<circle cx="480.3" cy="746.7" r="4.3" fill="rgb(191,191,191)" stroke="#111" stroke-width="1"/>
<circle cx="483.8" cy="746.4" r="4.3" fill="rgb(204,204,204)" stroke="#111" stroke-width="1"/>
<circle cx="486.4" cy="747.1" r="4.3" fill="rgb(217,217,217)" stroke="#111" stroke-width="1"/>
<circle cx="488.9" cy="748.1" r="4.3" fill="rgb(229,229,229)" stroke="#111" stroke-width="1"/>
<circle cx="490.4" cy="747.4" r="4.3" fill="rgb(242,242,242)" stroke="#111" stroke-width="1"/>
<rect x="483.1" y="738.4" width="12.8" height="12" fill="none" stroke="#000" stroke-width="2"/>
<circle cx="492.3" cy="747.1" r="4.3" fill="#fff" stroke="#111" stroke-width="1"/>
<rect x="626.00" y="633.00" width="1036.00" height="226.00" fill="#0c0c0c"/>
<rect x="627.80" y="634.10" width="1032.50" height="27.50" fill="url(#gHead)"/>
<g clip-path="url(#cTab)">
<rect x="627.80" y="662.00" width="1032.50" height="25.90" fill="#454545"/>
<rect x="627.80" y="687.80" width="1032.50" height="25.90" fill="#767676"/>
<rect x="627.80" y="713.60" width="1032.50" height="25.90" fill="#454545"/>
<rect x="627.80" y="739.40" width="1032.50" height="25.90" fill="#767676"/>
<rect x="627.80" y="765.20" width="1032.50" height="25.90" fill="#454545"/>
<rect x="627.80" y="791.00" width="1032.50" height="25.90" fill="#767676"/>
<rect x="627.80" y="816.80" width="1032.50" height="25.90" fill="#454545"/>
<text x="829.3" y="654.3" font-size="14.6" fill="#f0f0f0" stroke="#f0f0f0" stroke-width="0.18" text-anchor="end">0</text>
<text x="920.0" y="654.3" font-size="14.6" fill="#f0f0f0" stroke="#f0f0f0" stroke-width="0.18" text-anchor="end">5</text>
<text x="1011.0" y="654.3" font-size="14.6" fill="#f0f0f0" stroke="#f0f0f0" stroke-width="0.18" text-anchor="end">10</text>
<text x="1093.3" y="654.3" font-size="14.6" fill="#f0f0f0" stroke="#f0f0f0" stroke-width="0.18" text-anchor="end">15</text>
<text x="1175.5" y="654.3" font-size="14.6" fill="#f0f0f0" stroke="#f0f0f0" stroke-width="0.18" text-anchor="end">20</text>
<text x="1257.7" y="654.3" font-size="14.6" fill="#f0f0f0" stroke="#f0f0f0" stroke-width="0.18" text-anchor="end">25</text>
<text x="1340.0" y="654.3" font-size="14.6" fill="#f0f0f0" stroke="#f0f0f0" stroke-width="0.18" text-anchor="end">30</text>
<text x="1422.2" y="654.3" font-size="14.6" fill="#f0f0f0" stroke="#f0f0f0" stroke-width="0.18" text-anchor="end">35</text>
<text x="1504.4" y="654.3" font-size="14.6" fill="#f0f0f0" stroke="#f0f0f0" stroke-width="0.18" text-anchor="end">40</text>
<text x="1586.6" y="654.3" font-size="14.6" fill="#f0f0f0" stroke="#f0f0f0" stroke-width="0.18" text-anchor="end">45</text>
<text x="1668.8" y="654.3" font-size="14.6" fill="#f0f0f0" stroke="#f0f0f0" stroke-width="0.18" text-anchor="end">50</text>
<text x="639.7" y="681.4" font-size="14.6" fill="#f2f2f2" stroke="#f2f2f2" stroke-width="0.18" font-weight="bold" textLength="59.5" lengthAdjust="spacingAndGlyphs">x: CIE31</text>
<text x="784.7" y="681.4" font-size="15" fill="#ececec" stroke="#ececec" stroke-width="0.18" textLength="47.2" lengthAdjust="spacingAndGlyphs">0,2595</text>
<text x="875.3" y="681.4" font-size="15" fill="#ececec" stroke="#ececec" stroke-width="0.18" textLength="47.2" lengthAdjust="spacingAndGlyphs">0,2862</text>
<text x="966.3" y="681.4" font-size="15" fill="#ececec" stroke="#ececec" stroke-width="0.18" textLength="47.2" lengthAdjust="spacingAndGlyphs">0,3071</text>
<text x="1048.1" y="681.4" font-size="15" fill="#ececec" stroke="#ececec" stroke-width="0.18" textLength="47.2" lengthAdjust="spacingAndGlyphs">0,3105</text>
<text x="1130.2" y="681.4" font-size="15" fill="#ececec" stroke="#ececec" stroke-width="0.18" textLength="47.2" lengthAdjust="spacingAndGlyphs">0,3130</text>
<text x="1212.6" y="681.4" font-size="15" fill="#ececec" stroke="#ececec" stroke-width="0.18" textLength="47.2" lengthAdjust="spacingAndGlyphs">0,3110</text>
<text x="1294.9" y="681.4" font-size="15" fill="#ececec" stroke="#ececec" stroke-width="0.18" textLength="47.2" lengthAdjust="spacingAndGlyphs">0,3103</text>
<text x="1377.1" y="681.4" font-size="15" fill="#ececec" stroke="#ececec" stroke-width="0.18" textLength="47.2" lengthAdjust="spacingAndGlyphs">0,3110</text>
<text x="1459.3" y="681.4" font-size="15" fill="#ececec" stroke="#ececec" stroke-width="0.18" textLength="47.2" lengthAdjust="spacingAndGlyphs">0,3108</text>
<text x="1541.5" y="681.4" font-size="15" fill="#ececec" stroke="#ececec" stroke-width="0.18" textLength="47.2" lengthAdjust="spacingAndGlyphs">0,3112</text>
<text x="1623.7" y="681.4" font-size="15" fill="#ececec" stroke="#ececec" stroke-width="0.18" textLength="47.2" lengthAdjust="spacingAndGlyphs">0,3095</text>
<text x="639.7" y="707.2" font-size="14.6" fill="#f2f2f2" stroke="#f2f2f2" stroke-width="0.18" font-weight="bold" textLength="59.5" lengthAdjust="spacingAndGlyphs">y: CIE31</text>
<text x="784.7" y="707.2" font-size="15" fill="#ececec" stroke="#ececec" stroke-width="0.18" textLength="47.2" lengthAdjust="spacingAndGlyphs">0,2671</text>
<text x="875.3" y="707.2" font-size="15" fill="#ececec" stroke="#ececec" stroke-width="0.18" textLength="47.2" lengthAdjust="spacingAndGlyphs">0,2943</text>
<text x="966.3" y="707.2" font-size="15" fill="#ececec" stroke="#ececec" stroke-width="0.18" textLength="47.2" lengthAdjust="spacingAndGlyphs">0,3119</text>
<text x="1048.1" y="707.2" font-size="15" fill="#ececec" stroke="#ececec" stroke-width="0.18" textLength="47.2" lengthAdjust="spacingAndGlyphs">0,3214</text>
<text x="1130.2" y="707.2" font-size="15" fill="#ececec" stroke="#ececec" stroke-width="0.18" textLength="47.2" lengthAdjust="spacingAndGlyphs">0,3268</text>
<text x="1212.6" y="707.2" font-size="15" fill="#ececec" stroke="#ececec" stroke-width="0.18" textLength="47.2" lengthAdjust="spacingAndGlyphs">0,3246</text>
<text x="1294.9" y="707.2" font-size="15" fill="#ececec" stroke="#ececec" stroke-width="0.18" textLength="47.2" lengthAdjust="spacingAndGlyphs">0,3259</text>
<text x="1377.1" y="707.2" font-size="15" fill="#ececec" stroke="#ececec" stroke-width="0.18" textLength="47.2" lengthAdjust="spacingAndGlyphs">0,3276</text>
<text x="1459.3" y="707.2" font-size="15" fill="#ececec" stroke="#ececec" stroke-width="0.18" textLength="47.2" lengthAdjust="spacingAndGlyphs">0,3279</text>
<text x="1541.5" y="707.2" font-size="15" fill="#ececec" stroke="#ececec" stroke-width="0.18" textLength="47.2" lengthAdjust="spacingAndGlyphs">0,3284</text>
<text x="1623.7" y="707.2" font-size="15" fill="#ececec" stroke="#ececec" stroke-width="0.18" textLength="47.2" lengthAdjust="spacingAndGlyphs">0,3272</text>
<text x="639.7" y="733.0" font-size="14.6" fill="#f2f2f2" stroke="#f2f2f2" stroke-width="0.18" font-weight="bold" textLength="9.5" lengthAdjust="spacingAndGlyphs">Y</text>
<text x="784.7" y="733.0" font-size="15" fill="#ececec" stroke="#ececec" stroke-width="0.18" textLength="47.2" lengthAdjust="spacingAndGlyphs">0,2896</text>
<text x="875.3" y="733.0" font-size="15" fill="#ececec" stroke="#ececec" stroke-width="0.18" textLength="47.2" lengthAdjust="spacingAndGlyphs">0,5948</text>
<text x="966.3" y="733.0" font-size="15" fill="#ececec" stroke="#ececec" stroke-width="0.18" textLength="47.2" lengthAdjust="spacingAndGlyphs">1,8248</text>
<text x="1048.1" y="733.0" font-size="15" fill="#ececec" stroke="#ececec" stroke-width="0.18" textLength="47.2" lengthAdjust="spacingAndGlyphs">4,0625</text>
<text x="1130.2" y="733.0" font-size="15" fill="#ececec" stroke="#ececec" stroke-width="0.18" textLength="47.2" lengthAdjust="spacingAndGlyphs">7,6839</text>
<text x="1212.6" y="733.0" font-size="15" fill="#ececec" stroke="#ececec" stroke-width="0.18" textLength="55.9" lengthAdjust="spacingAndGlyphs">12,8257</text>
<text x="1294.9" y="733.0" font-size="15" fill="#ececec" stroke="#ececec" stroke-width="0.18" textLength="55.9" lengthAdjust="spacingAndGlyphs">18,8896</text>
<text x="1377.1" y="733.0" font-size="15" fill="#ececec" stroke="#ececec" stroke-width="0.18" textLength="55.9" lengthAdjust="spacingAndGlyphs">27,0336</text>
<text x="1459.3" y="733.0" font-size="15" fill="#ececec" stroke="#ececec" stroke-width="0.18" textLength="55.9" lengthAdjust="spacingAndGlyphs">36,8179</text>
<text x="1541.5" y="733.0" font-size="15" fill="#ececec" stroke="#ececec" stroke-width="0.18" textLength="55.9" lengthAdjust="spacingAndGlyphs">48,5358</text>
<text x="1623.7" y="733.0" font-size="15" fill="#ececec" stroke="#ececec" stroke-width="0.18" textLength="55.9" lengthAdjust="spacingAndGlyphs">62,2841</text>
<text x="639.7" y="758.8" font-size="14.6" fill="#f2f2f2" stroke="#f2f2f2" stroke-width="0.18" font-weight="bold" textLength="63.0" lengthAdjust="spacingAndGlyphs">Target Y</text>
<text x="784.7" y="758.8" font-size="15" fill="#ececec" stroke="#ececec" stroke-width="0.18" textLength="47.2" lengthAdjust="spacingAndGlyphs">0,0000</text>
<text x="875.3" y="758.8" font-size="15" fill="#ececec" stroke="#ececec" stroke-width="0.18" textLength="47.2" lengthAdjust="spacingAndGlyphs">1,2316</text>
<text x="966.3" y="758.8" font-size="15" fill="#ececec" stroke="#ececec" stroke-width="0.18" textLength="47.2" lengthAdjust="spacingAndGlyphs">3,1611</text>
<text x="1048.1" y="758.8" font-size="15" fill="#ececec" stroke="#ececec" stroke-width="0.18" textLength="47.2" lengthAdjust="spacingAndGlyphs">5,9314</text>
<text x="1130.2" y="758.8" font-size="15" fill="#ececec" stroke="#ececec" stroke-width="0.18" textLength="55.9" lengthAdjust="spacingAndGlyphs">10,1307</text>
<text x="1212.6" y="758.8" font-size="15" fill="#ececec" stroke="#ececec" stroke-width="0.18" textLength="55.9" lengthAdjust="spacingAndGlyphs">15,6895</text>
<text x="1294.9" y="758.8" font-size="15" fill="#ececec" stroke="#ececec" stroke-width="0.18" textLength="55.9" lengthAdjust="spacingAndGlyphs">22,1167</text>
<text x="1377.1" y="758.8" font-size="15" fill="#ececec" stroke="#ececec" stroke-width="0.18" textLength="55.9" lengthAdjust="spacingAndGlyphs">30,5711</text>
<text x="1459.3" y="758.8" font-size="15" fill="#ececec" stroke="#ececec" stroke-width="0.18" textLength="55.9" lengthAdjust="spacingAndGlyphs">40,6605</text>
<text x="1541.5" y="758.8" font-size="15" fill="#ececec" stroke="#ececec" stroke-width="0.18" textLength="55.9" lengthAdjust="spacingAndGlyphs">52,4645</text>
<text x="1623.7" y="758.8" font-size="15" fill="#ececec" stroke="#ececec" stroke-width="0.18" textLength="55.9" lengthAdjust="spacingAndGlyphs">66,0513</text>
<text x="639.7" y="784.6" font-size="14.6" fill="#f2f2f2" stroke="#f2f2f2" stroke-width="0.18" font-weight="bold" textLength="127.0" lengthAdjust="spacingAndGlyphs">Gamma Log/Log</text>
<text x="784.7" y="784.6" font-size="15" fill="#ececec" stroke="#ececec" stroke-width="0.18" textLength="47.2" lengthAdjust="spacingAndGlyphs">1,2778</text>
<text x="875.3" y="784.6" font-size="15" fill="#ececec" stroke="#ececec" stroke-width="0.18" textLength="47.2" lengthAdjust="spacingAndGlyphs">2,0976</text>
<text x="966.3" y="784.6" font-size="15" fill="#ececec" stroke="#ececec" stroke-width="0.18" textLength="47.2" lengthAdjust="spacingAndGlyphs">2,2434</text>
<text x="1048.1" y="784.6" font-size="15" fill="#ececec" stroke="#ececec" stroke-width="0.18" textLength="47.2" lengthAdjust="spacingAndGlyphs">2,2703</text>
<text x="1130.2" y="784.6" font-size="15" fill="#ececec" stroke="#ececec" stroke-width="0.18" textLength="47.2" lengthAdjust="spacingAndGlyphs">2,2893</text>
<text x="1212.6" y="784.6" font-size="15" fill="#ececec" stroke="#ececec" stroke-width="0.18" textLength="47.2" lengthAdjust="spacingAndGlyphs">2,2947</text>
<text x="1294.9" y="784.6" font-size="15" fill="#ececec" stroke="#ececec" stroke-width="0.18" textLength="47.2" lengthAdjust="spacingAndGlyphs">2,3007</text>
<text x="1377.1" y="784.6" font-size="15" fill="#ececec" stroke="#ececec" stroke-width="0.18" textLength="47.2" lengthAdjust="spacingAndGlyphs">2,3053</text>
<text x="1459.3" y="784.6" font-size="15" fill="#ececec" stroke="#ececec" stroke-width="0.18" textLength="47.2" lengthAdjust="spacingAndGlyphs">2,3111</text>
<text x="1541.5" y="784.6" font-size="15" fill="#ececec" stroke="#ececec" stroke-width="0.18" textLength="47.2" lengthAdjust="spacingAndGlyphs">2,3123</text>
<text x="1623.7" y="784.6" font-size="15" fill="#ececec" stroke="#ececec" stroke-width="0.18" textLength="47.2" lengthAdjust="spacingAndGlyphs">2,3094</text>
<text x="639.7" y="810.4" font-size="14.6" fill="#f2f2f2" stroke="#f2f2f2" stroke-width="0.18" font-weight="bold" textLength="28.0" lengthAdjust="spacingAndGlyphs">CCT</text>
<text x="784.7" y="810.4" font-size="15" fill="#ececec" stroke="#ececec" stroke-width="0.18" textLength="81.9" lengthAdjust="spacingAndGlyphs">14789,0000</text>
<text x="875.3" y="810.4" font-size="15" fill="#ececec" stroke="#ececec" stroke-width="0.18" textLength="73.2" lengthAdjust="spacingAndGlyphs">9076,0000</text>
<text x="966.3" y="810.4" font-size="15" fill="#ececec" stroke="#ececec" stroke-width="0.18" textLength="73.2" lengthAdjust="spacingAndGlyphs">7013,0000</text>
<text x="1048.1" y="810.4" font-size="15" fill="#ececec" stroke="#ececec" stroke-width="0.18" textLength="73.2" lengthAdjust="spacingAndGlyphs">6692,0000</text>
<text x="1130.2" y="810.4" font-size="15" fill="#ececec" stroke="#ececec" stroke-width="0.18" textLength="73.2" lengthAdjust="spacingAndGlyphs">6504,0000</text>
<text x="1212.6" y="810.4" font-size="15" fill="#ececec" stroke="#ececec" stroke-width="0.18" textLength="73.2" lengthAdjust="spacingAndGlyphs">6632,0000</text>
<text x="1294.9" y="810.4" font-size="15" fill="#ececec" stroke="#ececec" stroke-width="0.18" textLength="73.2" lengthAdjust="spacingAndGlyphs">6661,0000</text>
<text x="1377.1" y="810.4" font-size="15" fill="#ececec" stroke="#ececec" stroke-width="0.18" textLength="73.2" lengthAdjust="spacingAndGlyphs">6610,0000</text>
<text x="1459.3" y="810.4" font-size="15" fill="#ececec" stroke="#ececec" stroke-width="0.18" textLength="73.2" lengthAdjust="spacingAndGlyphs">6615,0000</text>
<text x="1541.5" y="810.4" font-size="15" fill="#ececec" stroke="#ececec" stroke-width="0.18" textLength="73.2" lengthAdjust="spacingAndGlyphs">6594,0000</text>
<text x="1623.7" y="810.4" font-size="15" fill="#ececec" stroke="#ececec" stroke-width="0.18" textLength="73.2" lengthAdjust="spacingAndGlyphs">6684,0000</text>
<text x="639.7" y="836.2" font-size="14.6" fill="#f2f2f2" stroke="#f2f2f2" stroke-width="0.18" font-weight="bold" textLength="62.0" lengthAdjust="spacingAndGlyphs">ΔE 2000</text>
<text x="784.7" y="836.2" font-size="15" fill="#ececec" stroke="#ececec" stroke-width="0.18" textLength="47.2" lengthAdjust="spacingAndGlyphs">1,0377</text>
<text x="875.3" y="836.2" font-size="15" fill="#ececec" stroke="#ececec" stroke-width="0.18" textLength="47.2" lengthAdjust="spacingAndGlyphs">1,4546</text>
<text x="966.3" y="836.2" font-size="15" fill="#ececec" stroke="#ececec" stroke-width="0.18" textLength="47.2" lengthAdjust="spacingAndGlyphs">2,8735</text>
<text x="1048.1" y="836.2" font-size="15" fill="#ececec" stroke="#ececec" stroke-width="0.18" textLength="47.2" lengthAdjust="spacingAndGlyphs">2,6871</text>
<text x="1130.2" y="836.2" font-size="15" fill="#ececec" stroke="#ececec" stroke-width="0.18" textLength="47.2" lengthAdjust="spacingAndGlyphs">2,3392</text>
<text x="1212.6" y="836.2" font-size="15" fill="#ececec" stroke="#ececec" stroke-width="0.18" textLength="47.2" lengthAdjust="spacingAndGlyphs">2,2758</text>
<text x="1294.9" y="836.2" font-size="15" fill="#ececec" stroke="#ececec" stroke-width="0.18" textLength="47.2" lengthAdjust="spacingAndGlyphs">2,0542</text>
<text x="1377.1" y="836.2" font-size="15" fill="#ececec" stroke="#ececec" stroke-width="0.18" textLength="47.2" lengthAdjust="spacingAndGlyphs">1,8643</text>
<text x="1459.3" y="836.2" font-size="15" fill="#ececec" stroke="#ececec" stroke-width="0.18" textLength="47.2" lengthAdjust="spacingAndGlyphs">1,8208</text>
<text x="1541.5" y="836.2" font-size="15" fill="#ececec" stroke="#ececec" stroke-width="0.18" textLength="47.2" lengthAdjust="spacingAndGlyphs">1,6988</text>
<text x="1623.7" y="836.2" font-size="15" fill="#ececec" stroke="#ececec" stroke-width="0.18" textLength="47.2" lengthAdjust="spacingAndGlyphs">1,6075</text>
</g>
<rect x="627.80" y="843.00" width="1032.50" height="15.90" fill="#606060"/>
<rect x="645.5" y="844" width="540.5" height="14" rx="7" fill="#444444"/>
<rect x="629.3" y="844.3" width="13" height="13.6" rx="2.5" fill="#8a8a8a" stroke="#9c9c9c" stroke-width="0.8"/>
<path d="M639.3 846.5v9.4l-6.3 -4.7Z" fill="#454545"/>
<rect x="1645.5" y="844.3" width="13.6" height="13.6" rx="2.5" fill="#8a8a8a" stroke="#9c9c9c" stroke-width="0.8"/>
<path d="M1649.7 846.5v9.4l6.3 -4.7Z" fill="#454545"/>
<rect x="0.00" y="871.00" width="1326.00" height="78.00" fill="#393939"/>
<rect x="-33.30" y="872" width="62.5" height="60" rx="3.5" fill="url(#gTile)"/>
<rect x="-27.10" y="877.7" width="50" height="30.2" rx="4" fill="rgb(7,7,7)"/>
<rect x="-26.00" y="879.3" width="48.9" height="28.5" rx="3.6" fill="rgb(13,13,13)" filter="url(#fInner)"/>
<text x="-1.9" y="926.9" font-size="12.6" fill="#2c2c2c" stroke="#2c2c2c" stroke-width="0.5" text-anchor="middle">5</text>
<rect x="31.70" y="872" width="62.5" height="60" rx="3.5" fill="url(#gTile)"/>
<rect x="37.90" y="877.7" width="50" height="30.2" rx="4" fill="rgb(14,14,14)"/>
<rect x="39.00" y="879.3" width="48.9" height="28.5" rx="3.6" fill="rgb(26,26,26)" filter="url(#fInner)"/>
<text x="63.1" y="926.9" font-size="12.6" fill="#2c2c2c" stroke="#2c2c2c" stroke-width="0.5" text-anchor="middle">10</text>
<rect x="96.70" y="872" width="62.5" height="60" rx="3.5" fill="url(#gTile)"/>
<rect x="102.90" y="877.7" width="50" height="30.2" rx="4" fill="rgb(20,20,20)"/>
<rect x="104.00" y="879.3" width="48.9" height="28.5" rx="3.6" fill="rgb(38,38,38)" filter="url(#fInner)"/>
<text x="128.1" y="926.9" font-size="12.6" fill="#2c2c2c" stroke="#2c2c2c" stroke-width="0.5" text-anchor="middle">15</text>
<rect x="161.70" y="872" width="62.5" height="60" rx="3.5" fill="url(#gTile)"/>
<rect x="167.90" y="877.7" width="50" height="30.2" rx="4" fill="rgb(28,28,28)"/>
<rect x="169.00" y="879.3" width="48.9" height="28.5" rx="3.6" fill="rgb(51,51,51)" filter="url(#fInner)"/>
<text x="193.1" y="926.9" font-size="12.6" fill="#2c2c2c" stroke="#2c2c2c" stroke-width="0.5" text-anchor="middle">20</text>
<rect x="226.70" y="872" width="62.5" height="60" rx="3.5" fill="url(#gTile)"/>
<rect x="232.90" y="877.7" width="50" height="30.2" rx="4" fill="rgb(35,35,35)"/>
<rect x="234.00" y="879.3" width="48.9" height="28.5" rx="3.6" fill="rgb(64,64,64)" filter="url(#fInner)"/>
<text x="258.1" y="926.9" font-size="12.6" fill="#2c2c2c" stroke="#2c2c2c" stroke-width="0.5" text-anchor="middle">25</text>
<rect x="291.70" y="872" width="62.5" height="60" rx="3.5" fill="url(#gTile)"/>
<rect x="297.90" y="877.7" width="50" height="30.2" rx="4" fill="rgb(41,41,41)"/>
<rect x="299.00" y="879.3" width="48.9" height="28.5" rx="3.6" fill="rgb(76,76,76)" filter="url(#fInner)"/>
<text x="323.1" y="926.9" font-size="12.6" fill="#2c2c2c" stroke="#2c2c2c" stroke-width="0.5" text-anchor="middle">30</text>
<rect x="356.70" y="872" width="62.5" height="60" rx="3.5" fill="url(#gTile)"/>
<rect x="362.90" y="877.7" width="50" height="30.2" rx="4" fill="rgb(48,48,48)"/>
<rect x="364.00" y="879.3" width="48.9" height="28.5" rx="3.6" fill="rgb(89,89,89)" filter="url(#fInner)"/>
<text x="388.1" y="926.9" font-size="12.6" fill="#2c2c2c" stroke="#2c2c2c" stroke-width="0.5" text-anchor="middle">35</text>
<rect x="421.70" y="872" width="62.5" height="60" rx="3.5" fill="url(#gTile)"/>
<rect x="427.90" y="877.7" width="50" height="30.2" rx="4" fill="rgb(56,56,56)"/>
<rect x="429.00" y="879.3" width="48.9" height="28.5" rx="3.6" fill="rgb(102,102,102)" filter="url(#fInner)"/>
<text x="453.1" y="926.9" font-size="12.6" fill="#2c2c2c" stroke="#2c2c2c" stroke-width="0.5" text-anchor="middle">40</text>
<rect x="486.70" y="872" width="62.5" height="60" rx="3.5" fill="url(#gTile)"/>
<rect x="492.90" y="877.7" width="50" height="30.2" rx="4" fill="rgb(63,63,63)"/>
<rect x="494.00" y="879.3" width="48.9" height="28.5" rx="3.6" fill="rgb(115,115,115)" filter="url(#fInner)"/>
<text x="518.1" y="926.9" font-size="12.6" fill="#2c2c2c" stroke="#2c2c2c" stroke-width="0.5" text-anchor="middle">45</text>
<rect x="551.70" y="872" width="62.5" height="60" rx="3.5" fill="url(#gTile)"/>
<rect x="557.90" y="877.7" width="50" height="30.2" rx="4" fill="rgb(69,69,69)"/>
<rect x="559.00" y="879.3" width="48.9" height="28.5" rx="3.6" fill="rgb(127,127,127)" filter="url(#fInner)"/>
<text x="583.1" y="926.9" font-size="12.6" fill="#2c2c2c" stroke="#2c2c2c" stroke-width="0.5" text-anchor="middle">50</text>
<rect x="616.70" y="872" width="62.5" height="60" rx="3.5" fill="url(#gTile)"/>
<rect x="622.90" y="877.7" width="50" height="30.2" rx="4" fill="rgb(77,77,77)"/>
<rect x="624.00" y="879.3" width="48.9" height="28.5" rx="3.6" fill="rgb(140,140,140)" filter="url(#fInner)"/>
<text x="648.1" y="926.9" font-size="12.6" fill="#2c2c2c" stroke="#2c2c2c" stroke-width="0.5" text-anchor="middle">55</text>
<rect x="681.70" y="872" width="62.5" height="60" rx="3.5" fill="url(#gTile)"/>
<rect x="687.90" y="877.7" width="50" height="30.2" rx="4" fill="rgb(84,84,84)"/>
<rect x="689.00" y="879.3" width="48.9" height="28.5" rx="3.6" fill="rgb(153,153,153)" filter="url(#fInner)"/>
<text x="713.1" y="926.9" font-size="12.6" fill="#2c2c2c" stroke="#2c2c2c" stroke-width="0.5" text-anchor="middle">60</text>
<rect x="746.70" y="872" width="62.5" height="60" rx="3.5" fill="url(#gTile)"/>
<rect x="752.90" y="877.7" width="50" height="30.2" rx="4" fill="rgb(91,91,91)"/>
<rect x="754.00" y="879.3" width="48.9" height="28.5" rx="3.6" fill="rgb(166,166,166)" filter="url(#fInner)"/>
<text x="778.1" y="926.9" font-size="12.6" fill="#2c2c2c" stroke="#2c2c2c" stroke-width="0.5" text-anchor="middle">65</text>
<rect x="811.70" y="872" width="62.5" height="60" rx="3.5" fill="url(#gTile)"/>
<rect x="817.90" y="877.7" width="50" height="30.2" rx="4" fill="rgb(97,97,97)"/>
<rect x="819.00" y="879.3" width="48.9" height="28.5" rx="3.6" fill="rgb(178,178,178)" filter="url(#fInner)"/>
<text x="843.1" y="926.9" font-size="12.6" fill="#2c2c2c" stroke="#2c2c2c" stroke-width="0.5" text-anchor="middle">70</text>
<rect x="876.70" y="872" width="62.5" height="60" rx="3.5" fill="url(#gTile)"/>
<rect x="882.90" y="877.7" width="50" height="30.2" rx="4" fill="rgb(105,105,105)"/>
<rect x="884.00" y="879.3" width="48.9" height="28.5" rx="3.6" fill="rgb(191,191,191)" filter="url(#fInner)"/>
<text x="908.1" y="926.9" font-size="12.6" fill="#2c2c2c" stroke="#2c2c2c" stroke-width="0.5" text-anchor="middle">75</text>
<rect x="941.70" y="872" width="62.5" height="60" rx="3.5" fill="url(#gTile)"/>
<rect x="947.90" y="877.7" width="50" height="30.2" rx="4" fill="rgb(112,112,112)"/>
<rect x="949.00" y="879.3" width="48.9" height="28.5" rx="3.6" fill="rgb(204,204,204)" filter="url(#fInner)"/>
<text x="973.1" y="926.9" font-size="12.6" fill="#2c2c2c" stroke="#2c2c2c" stroke-width="0.5" text-anchor="middle">80</text>
<rect x="1006.70" y="872" width="62.5" height="60" rx="3.5" fill="url(#gTile)"/>
<rect x="1012.90" y="877.7" width="50" height="30.2" rx="4" fill="rgb(119,119,119)"/>
<rect x="1014.00" y="879.3" width="48.9" height="28.5" rx="3.6" fill="rgb(217,217,217)" filter="url(#fInner)"/>
<text x="1038.1" y="926.9" font-size="12.6" fill="#2c2c2c" stroke="#2c2c2c" stroke-width="0.5" text-anchor="middle">85</text>
<rect x="1071.70" y="872" width="62.5" height="60" rx="3.5" fill="url(#gTile)"/>
<rect x="1077.90" y="877.7" width="50" height="30.2" rx="4" fill="rgb(125,125,125)"/>
<rect x="1079.00" y="879.3" width="48.9" height="28.5" rx="3.6" fill="rgb(229,229,229)" filter="url(#fInner)"/>
<text x="1103.1" y="926.9" font-size="12.6" fill="#2c2c2c" stroke="#2c2c2c" stroke-width="0.5" text-anchor="middle">90</text>
<rect x="1136.70" y="872" width="62.5" height="60" rx="3.5" fill="url(#gTile)"/>
<rect x="1142.90" y="877.7" width="50" height="30.2" rx="4" fill="rgb(133,133,133)"/>
<rect x="1144.00" y="879.3" width="48.9" height="28.5" rx="3.6" fill="rgb(242,242,242)" filter="url(#fInner)"/>
<text x="1168.1" y="926.9" font-size="12.6" fill="#2c2c2c" stroke="#2c2c2c" stroke-width="0.5" text-anchor="middle">95</text>
<rect x="1202.00" y="872" width="62.0" height="60" rx="3.5" fill="url(#gTileSel)"/>
<rect x="1208.20" y="877.7" width="50" height="30.2" rx="4" fill="rgb(90,90,90)"/>
<rect x="1209.30" y="879.3" width="48.9" height="28.5" rx="3.6" fill="rgb(255,255,255)" filter="url(#fInner)"/>
<text x="1233.4" y="926.9" font-size="12.6" fill="#ffffff" text-anchor="middle" font-weight="bold">100</text>
<rect x="0.00" y="932.80" width="1264.50" height="15.40" fill="#606060"/>
<rect x="0.00" y="948.20" width="1264.50" height="1.00" fill="#3a3a3a"/>
<rect x="106.5" y="934.3" width="1139" height="13.4" rx="6.7" fill="#474747"/>
<rect x="2" y="934" width="12" height="13.4" rx="2.5" fill="#8a8a8a" stroke="#9c9c9c" stroke-width="0.8"/>
<path d="M11.3 936v9.4l-6.3 -4.7Z" fill="#454545"/>
<rect x="1250.3" y="934" width="12.7" height="13.4" rx="2.5" fill="#7a7a7a" stroke="#8c8c8c" stroke-width="0.8"/>
<path d="M1254 936v9.4l6.3 -4.7Z" fill="#454545"/>
<path d="M1265.5 894V875a3.5 3.5 0 0 1 3.5 -3.5H1321.5a3.5 3.5 0 0 1 3.5 3.5V894Z" fill="url(#gUp)"/>
<line x1="1265.50" y1="894.50" x2="1325.00" y2="894.50" stroke="#3a3a3a" stroke-width="1.2"/>
<rect x="1265.50" y="895.20" width="59.50" height="53.80" fill="url(#gUp2)"/>
<circle cx="1295" cy="882.8" r="9" fill="url(#gRecess)"/>
<path d="M1288.8 886h12.4l-6.2 -6.6Z" fill="#2c2c2c"/>
<rect x="1277" y="903.6" width="36.2" height="35.6" rx="5" fill="url(#gSq)" stroke="#202020" stroke-width="3.2"/>
<rect x="1286.70" y="913.00" width="17.30" height="17.00" fill="#000000"/>
<rect x="1286.70" y="913.00" width="17.30" height="8.50" fill="#1b1b1b"/>
<rect x="1325.00" y="870.00" width="339.00" height="79.00" fill="#262626"/>
<rect x="1326.30" y="871.00" width="57.50" height="37.60" fill="url(#gBtnA)"/>
<rect x="1384.90" y="871.00" width="55.00" height="37.60" fill="url(#gBtnA)"/>
<rect x="1441.00" y="871.00" width="55.70" height="37.60" fill="url(#gBtnA)"/>
<rect x="1497.80" y="871.00" width="55.30" height="37.60" fill="url(#gBtnA)"/>
<rect x="1554.20" y="871.00" width="55.00" height="37.60" fill="url(#gBtnA)"/>
<rect x="1609.40" y="871.00" width="55.00" height="37.60" fill="url(#gDark)"/>
<circle cx="1355.4" cy="890.2" r="12" fill="url(#gRec2)"/>
<circle cx="1412.4" cy="890.2" r="12" fill="url(#gRec2)"/>
<circle cx="1469.0" cy="890.2" r="12" fill="url(#gRec2)"/>
<circle cx="1525.4" cy="890.2" r="12" fill="url(#gRec2)"/>
<circle cx="1581.7" cy="890.2" r="12" fill="url(#gRec2)"/>
<circle cx="1638.8" cy="890.2" r="12" fill="url(#gRecD)"/>
<rect x="1350.70" y="885.60" width="9.40" height="9.40" fill="#353535"/>
<path d="M1408.6 883.8v13l10.4 -6.5Z" fill="#353535"/>
<path d="M1465.6 885.3h-2.9v10.6h2.9M1472.6 885.3h2.9v10.6h-2.9" fill="none" stroke="#353535" stroke-width="2.5"/>
<circle cx="1467.6" cy="890.6" r="0.9" fill="#4a4a4a"/><circle cx="1470.6" cy="890.6" r="0.9" fill="#4a4a4a"/>
<path d="M1525.4 890.2c-2.4 -3.6 -7.6 -3.4 -7.6 0s5.2 3.6 7.6 0c2.4 -3.6 7.6 -3.4 7.6 0s-5.2 3.6 -7.6 0Z" fill="none" stroke="#353535" stroke-width="2.3"/>
<g transform="translate(1581.7 890.6)" fill="none" stroke="#353535" stroke-width="3"><path d="M-5.2 -1a5.3 5.3 0 0 1 8.6 -3.2"/><path d="M5.2 1a5.3 5.3 0 0 1 -8.6 3.2"/></g>
<path d="M1583.6 885.6l4.8 -2.4l-0.2 5.6Z M1579.8 895.6l-4.8 2.4l0.2 -5.6Z" fill="#353535"/>
<rect x="1326.30" y="910.60" width="170.20" height="37.20" fill="url(#gBtnB)"/>
<rect x="1498.60" y="910.60" width="166.00" height="37.20" fill="url(#gBtnB)"/>
<circle cx="1365" cy="929.2" r="12" fill="url(#gRec2)"/>
<circle cx="1631.3" cy="929.6" r="12" fill="url(#gRec2)"/>
<path d="M1364.6 924.4l-4.6 4.8l4.6 4.8M1370 924.4l-4.6 4.8l4.6 4.8" fill="none" stroke="#353535" stroke-width="2.1"/>
<path d="M1626.6 924.8l4.6 4.8l-4.6 4.8M1632 924.8l4.6 4.8l-4.6 4.8" fill="none" stroke="#353535" stroke-width="2.1"/>
<text x="1398.7" y="938.6" font-size="28" fill="#363636" textLength="62.5" lengthAdjust="spacingAndGlyphs" filter="url(#fTxt)" stroke="#363636" stroke-width="0.9">Back</text>
<text x="1532.2" y="938.8" font-size="28" fill="#363636" textLength="64.2" lengthAdjust="spacingAndGlyphs" filter="url(#fTxt)" stroke="#363636" stroke-width="0.9">Next</text>
</svg>
</body>
</html>
